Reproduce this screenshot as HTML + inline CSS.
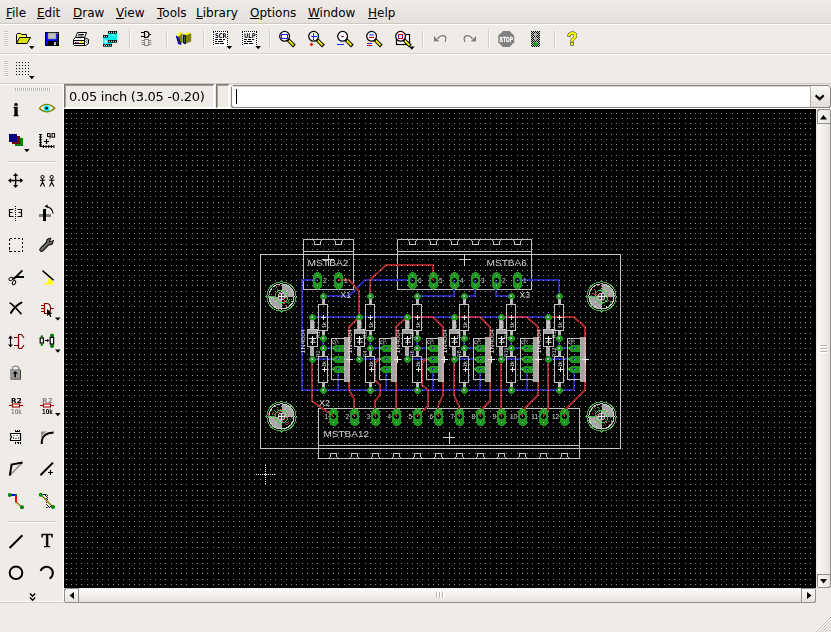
<!DOCTYPE html><html><head><meta charset="utf-8"><title>EAGLE Board</title>
<style>
html,body{margin:0;padding:0}
body{width:831px;height:632px;background:#efebe7;position:relative;overflow:hidden;font-family:"DejaVu Sans","Liberation Sans",sans-serif;font-size:12px;color:#000}
.abs{position:absolute}
.menu span{position:absolute;top:5px;white-space:nowrap;font-size:12px;line-height:16px}
.menu u{text-decoration:underline;text-underline-offset:1px}

</style></head><body>
<svg class="abs" style="left:0;top:0;will-change:transform" width="831" height="632" viewBox="0 0 831 632" shape-rendering="crispEdges">
<rect x="64" y="109" width="752" height="479" fill="#000"/>
<g font-family="Liberation Sans, sans-serif"><rect x="260.5" y="254.5" width="360.0" height="194.0" fill="none" stroke="#c0c0c0" stroke-width="1"/>
<path d="M281.5 296.5V283.9A12.6 12.6 0 0 1 294.1 296.5Z" fill="#a4a4a4"/><path d="M281.5 296.5V309.1A12.6 12.6 0 0 1 268.9 296.5Z" fill="#a4a4a4"/><circle cx="281.5" cy="296.5" r="12.6" fill="none" stroke="#c8c8c8" stroke-width="1"/><rect x="271" y="294" width="1" height="1" fill="#30b030"/><rect x="284" y="297" width="1" height="1" fill="#c03068"/><rect x="281" y="291" width="1" height="1" fill="#8cc88c"/><rect x="285" y="288" width="1" height="1" fill="#d0a8b8"/><rect x="284" y="292" width="1" height="1" fill="#8cc88c"/><rect x="292" y="294" width="1" height="1" fill="#d0a8b8"/><rect x="286" y="298" width="1" height="1" fill="#30b030"/><rect x="277" y="302" width="1" height="1" fill="#d0a8b8"/><rect x="279" y="292" width="1" height="1" fill="#30b030"/><rect x="286" y="298" width="1" height="1" fill="#c03068"/><rect x="280" y="303" width="1" height="1" fill="#8cc88c"/><rect x="292" y="289" width="1" height="1" fill="#d0a8b8"/><rect x="279" y="290" width="1" height="1" fill="#30b030"/><rect x="287" y="296" width="1" height="1" fill="#d0a8b8"/><rect x="281" y="291" width="1" height="1" fill="#30b030"/><rect x="269" y="293" width="1" height="1" fill="#c03068"/><rect x="287" y="302" width="1" height="1" fill="#30b030"/><rect x="280" y="300" width="1" height="1" fill="#d0a8b8"/><rect x="279" y="308" width="1" height="1" fill="#8cc88c"/><rect x="284" y="285" width="1" height="1" fill="#d0a8b8"/><rect x="286" y="297" width="1" height="1" fill="#30b030"/><rect x="281" y="308" width="1" height="1" fill="#d0a8b8"/><rect x="278" y="292" width="1" height="1" fill="#30b030"/><rect x="275" y="288" width="1" height="1" fill="#c03068"/><rect x="286" y="293" width="1" height="1" fill="#8cc88c"/><rect x="288" y="286" width="1" height="1" fill="#d0a8b8"/><rect x="276" y="287" width="1" height="1" fill="#30b030"/><rect x="275" y="297" width="1" height="1" fill="#d0a8b8"/><rect x="275" y="294" width="1" height="1" fill="#30b030"/><rect x="278" y="307" width="1" height="1" fill="#d0a8b8"/><rect x="286" y="302" width="1" height="1" fill="#30b030"/><rect x="283" y="290" width="1" height="1" fill="#d0a8b8"/><rect x="289" y="299" width="1" height="1" fill="#30b030"/><rect x="285" y="297" width="1" height="1" fill="#c03068"/><rect x="271" y="299" width="1" height="1" fill="#8cc88c"/><rect x="276" y="305" width="1" height="1" fill="#d0a8b8"/><rect x="282" y="290" width="1" height="1" fill="#8cc88c"/><rect x="277" y="299" width="1" height="1" fill="#d0a8b8"/><rect x="283" y="303" width="1" height="1" fill="#30b030"/><rect x="271" y="296" width="1" height="1" fill="#c03068"/><rect x="284" y="285" width="1" height="1" fill="#8cc88c"/><rect x="285" y="284" width="1" height="1" fill="#d0a8b8"/><rect x="274" y="296" width="1" height="1" fill="#30b030"/><rect x="284" y="301" width="1" height="1" fill="#c03068"/><rect x="288" y="303" width="1" height="1" fill="#30b030"/><rect x="285" y="291" width="1" height="1" fill="#d0a8b8"/><rect x="288" y="306" width="1" height="1" fill="#30b030"/><rect x="270" y="296" width="1" height="1" fill="#d0a8b8"/><rect x="283" y="285" width="1" height="1" fill="#8cc88c"/><rect x="286" y="305" width="1" height="1" fill="#c03068"/><rect x="288" y="301" width="1" height="1" fill="#30b030"/><rect x="276" y="286" width="1" height="1" fill="#c03068"/><rect x="284" y="300" width="1" height="1" fill="#30b030"/><rect x="282" y="289" width="1" height="1" fill="#d0a8b8"/><rect x="288" y="300" width="1" height="1" fill="#30b030"/><rect x="287" y="290" width="1" height="1" fill="#d0a8b8"/><rect x="289" y="302" width="1" height="1" fill="#30b030"/><rect x="285" y="305" width="1" height="1" fill="#c03068"/><rect x="280" y="301" width="1" height="1" fill="#8cc88c"/><rect x="271" y="298" width="1" height="1" fill="#d0a8b8"/><rect x="289" y="299" width="1" height="1" fill="#30b030"/><rect x="278" y="298" width="1" height="1" fill="#d0a8b8"/><rect x="284" y="302" width="1" height="1" fill="#30b030"/><rect x="280" y="306" width="1" height="1" fill="#d0a8b8"/><rect x="287" y="292" width="1" height="1" fill="#8cc88c"/><rect x="278" y="309" width="1" height="1" fill="#d0a8b8"/><rect x="278" y="303" width="1" height="1" fill="#8cc88c"/><rect x="278" y="286" width="1" height="1" fill="#c03068"/><rect x="285" y="297" width="1" height="1" fill="#30b030"/><rect x="279" y="285" width="1" height="1" fill="#c03068"/><rect x="282" y="283" width="1" height="1" fill="#8cc88c"/><rect x="284" y="300" width="1" height="1" fill="#c03068"/><rect x="272" y="287" width="1" height="1" fill="#30b030"/><rect x="273" y="304" width="1" height="1" fill="#d0a8b8"/><rect x="282" y="305" width="1" height="1" fill="#30b030"/><rect x="283" y="302" width="1" height="1" fill="#c03068"/><rect x="277" y="290" width="1" height="1" fill="#30b030"/><rect x="280" y="292" width="1" height="1" fill="#c03068"/><rect x="288" y="287" width="1" height="1" fill="#8cc88c"/><rect x="277" y="289" width="1" height="1" fill="#c03068"/><rect x="291" y="299" width="1" height="1" fill="#30b030"/><rect x="278" y="302" width="1" height="1" fill="#d0a8b8"/><rect x="282" y="305" width="1" height="1" fill="#30b030"/><rect x="278" y="300" width="1" height="1" fill="#d0a8b8"/><rect x="285" y="295" width="1" height="1" fill="#8cc88c"/><rect x="273" y="289" width="1" height="1" fill="#c03068"/><rect x="284" y="285" width="1" height="1" fill="#8cc88c"/><rect x="280" y="302" width="1" height="1" fill="#d0a8b8"/><rect x="287" y="292" width="1" height="1" fill="#8cc88c"/><rect x="284" y="303" width="1" height="1" fill="#c03068"/><circle cx="281.5" cy="296.5" r="14.6" fill="none" stroke="#46b446" stroke-width="1"/><circle cx="281.5" cy="296.5" r="6.5" fill="none" stroke="#46c846" stroke-width="1"/><path d="M265.5 296.5H275.0" stroke="#46b446" stroke-width="1"/><circle cx="281.5" cy="296.5" r="3.8" fill="#b4b4b4"/><rect x="279.0" y="294.0" width="2" height="2" fill="#484848"/><rect x="279.0" y="297.0" width="2" height="2" fill="#484848"/><rect x="282.0" y="294.0" width="2" height="2" fill="#484848"/><rect x="282.0" y="297.0" width="2" height="2" fill="#484848"/><path d="M278.0 296.5H285.0M281.5 293.0V300.0" stroke="#f0f0f0" stroke-width="1"/>
<path d="M601.5 296.5V283.9A12.6 12.6 0 0 1 614.1 296.5Z" fill="#a4a4a4"/><path d="M601.5 296.5V309.1A12.6 12.6 0 0 1 588.9 296.5Z" fill="#a4a4a4"/><circle cx="601.5" cy="296.5" r="12.6" fill="none" stroke="#c8c8c8" stroke-width="1"/><rect x="589" y="291" width="1" height="1" fill="#30b030"/><rect x="596" y="298" width="1" height="1" fill="#d0a8b8"/><rect x="607" y="294" width="1" height="1" fill="#8cc88c"/><rect x="599" y="305" width="1" height="1" fill="#d0a8b8"/><rect x="606" y="301" width="1" height="1" fill="#30b030"/><rect x="600" y="283" width="1" height="1" fill="#c03068"/><rect x="602" y="302" width="1" height="1" fill="#30b030"/><rect x="593" y="293" width="1" height="1" fill="#c03068"/><rect x="612" y="291" width="1" height="1" fill="#8cc88c"/><rect x="602" y="302" width="1" height="1" fill="#c03068"/><rect x="599" y="290" width="1" height="1" fill="#30b030"/><rect x="602" y="292" width="1" height="1" fill="#d0a8b8"/><rect x="607" y="286" width="1" height="1" fill="#8cc88c"/><rect x="609" y="294" width="1" height="1" fill="#d0a8b8"/><rect x="606" y="306" width="1" height="1" fill="#30b030"/><rect x="611" y="292" width="1" height="1" fill="#d0a8b8"/><rect x="598" y="298" width="1" height="1" fill="#8cc88c"/><rect x="592" y="296" width="1" height="1" fill="#d0a8b8"/><rect x="604" y="299" width="1" height="1" fill="#30b030"/><rect x="609" y="290" width="1" height="1" fill="#d0a8b8"/><rect x="606" y="290" width="1" height="1" fill="#8cc88c"/><rect x="594" y="302" width="1" height="1" fill="#d0a8b8"/><rect x="604" y="305" width="1" height="1" fill="#30b030"/><rect x="607" y="294" width="1" height="1" fill="#d0a8b8"/><rect x="596" y="308" width="1" height="1" fill="#8cc88c"/><rect x="598" y="304" width="1" height="1" fill="#d0a8b8"/><rect x="597" y="295" width="1" height="1" fill="#30b030"/><rect x="592" y="293" width="1" height="1" fill="#c03068"/><rect x="603" y="300" width="1" height="1" fill="#30b030"/><rect x="589" y="296" width="1" height="1" fill="#c03068"/><rect x="606" y="292" width="1" height="1" fill="#8cc88c"/><rect x="594" y="289" width="1" height="1" fill="#c03068"/><rect x="605" y="293" width="1" height="1" fill="#8cc88c"/><rect x="611" y="290" width="1" height="1" fill="#d0a8b8"/><rect x="602" y="292" width="1" height="1" fill="#8cc88c"/><rect x="604" y="286" width="1" height="1" fill="#d0a8b8"/><rect x="595" y="290" width="1" height="1" fill="#30b030"/><rect x="607" y="285" width="1" height="1" fill="#d0a8b8"/><rect x="605" y="296" width="1" height="1" fill="#8cc88c"/><rect x="609" y="301" width="1" height="1" fill="#c03068"/><rect x="605" y="300" width="1" height="1" fill="#30b030"/><rect x="596" y="294" width="1" height="1" fill="#c03068"/><rect x="611" y="291" width="1" height="1" fill="#8cc88c"/><rect x="610" y="297" width="1" height="1" fill="#c03068"/><rect x="608" y="306" width="1" height="1" fill="#30b030"/><rect x="604" y="289" width="1" height="1" fill="#d0a8b8"/><rect x="600" y="289" width="1" height="1" fill="#30b030"/><rect x="607" y="293" width="1" height="1" fill="#d0a8b8"/><rect x="593" y="293" width="1" height="1" fill="#30b030"/><rect x="614" y="293" width="1" height="1" fill="#d0a8b8"/><rect x="610" y="301" width="1" height="1" fill="#30b030"/><rect x="593" y="301" width="1" height="1" fill="#d0a8b8"/><rect x="610" y="302" width="1" height="1" fill="#30b030"/><rect x="598" y="298" width="1" height="1" fill="#d0a8b8"/><rect x="592" y="305" width="1" height="1" fill="#8cc88c"/><rect x="605" y="290" width="1" height="1" fill="#d0a8b8"/><rect x="597" y="296" width="1" height="1" fill="#8cc88c"/><rect x="607" y="301" width="1" height="1" fill="#c03068"/><rect x="610" y="301" width="1" height="1" fill="#30b030"/><rect x="609" y="293" width="1" height="1" fill="#d0a8b8"/><rect x="597" y="285" width="1" height="1" fill="#30b030"/><rect x="601" y="286" width="1" height="1" fill="#c03068"/><rect x="611" y="303" width="1" height="1" fill="#30b030"/><rect x="591" y="295" width="1" height="1" fill="#c03068"/><rect x="606" y="297" width="1" height="1" fill="#30b030"/><rect x="604" y="284" width="1" height="1" fill="#d0a8b8"/><rect x="602" y="303" width="1" height="1" fill="#30b030"/><rect x="597" y="300" width="1" height="1" fill="#d0a8b8"/><rect x="603" y="286" width="1" height="1" fill="#8cc88c"/><rect x="596" y="306" width="1" height="1" fill="#d0a8b8"/><rect x="614" y="295" width="1" height="1" fill="#8cc88c"/><rect x="608" y="300" width="1" height="1" fill="#c03068"/><rect x="596" y="296" width="1" height="1" fill="#8cc88c"/><rect x="595" y="292" width="1" height="1" fill="#c03068"/><rect x="607" y="301" width="1" height="1" fill="#30b030"/><rect x="591" y="305" width="1" height="1" fill="#d0a8b8"/><rect x="601" y="309" width="1" height="1" fill="#8cc88c"/><rect x="601" y="288" width="1" height="1" fill="#d0a8b8"/><rect x="605" y="295" width="1" height="1" fill="#8cc88c"/><rect x="594" y="294" width="1" height="1" fill="#c03068"/><rect x="595" y="292" width="1" height="1" fill="#30b030"/><rect x="607" y="299" width="1" height="1" fill="#c03068"/><rect x="610" y="302" width="1" height="1" fill="#30b030"/><rect x="598" y="285" width="1" height="1" fill="#c03068"/><rect x="610" y="293" width="1" height="1" fill="#8cc88c"/><rect x="595" y="285" width="1" height="1" fill="#c03068"/><rect x="605" y="295" width="1" height="1" fill="#8cc88c"/><rect x="607" y="298" width="1" height="1" fill="#c03068"/><rect x="613" y="296" width="1" height="1" fill="#8cc88c"/><rect x="589" y="290" width="1" height="1" fill="#c03068"/><circle cx="601.5" cy="296.5" r="14.6" fill="none" stroke="#46b446" stroke-width="1"/><circle cx="601.5" cy="296.5" r="6.5" fill="none" stroke="#46c846" stroke-width="1"/><path d="M585.5 296.5H595.0" stroke="#46b446" stroke-width="1"/><circle cx="601.5" cy="296.5" r="3.8" fill="#b4b4b4"/><rect x="599.0" y="294.0" width="2" height="2" fill="#484848"/><rect x="599.0" y="297.0" width="2" height="2" fill="#484848"/><rect x="602.0" y="294.0" width="2" height="2" fill="#484848"/><rect x="602.0" y="297.0" width="2" height="2" fill="#484848"/><path d="M598.0 296.5H605.0M601.5 293.0V300.0" stroke="#f0f0f0" stroke-width="1"/>
<path d="M281.5 416.5V403.9A12.6 12.6 0 0 1 294.1 416.5Z" fill="#a4a4a4"/><path d="M281.5 416.5V429.1A12.6 12.6 0 0 1 268.9 416.5Z" fill="#a4a4a4"/><circle cx="281.5" cy="416.5" r="12.6" fill="none" stroke="#c8c8c8" stroke-width="1"/><rect x="285" y="414" width="1" height="1" fill="#8cc88c"/><rect x="282" y="421" width="1" height="1" fill="#c03068"/><rect x="284" y="419" width="1" height="1" fill="#30b030"/><rect x="268" y="413" width="1" height="1" fill="#c03068"/><rect x="284" y="408" width="1" height="1" fill="#8cc88c"/><rect x="274" y="421" width="1" height="1" fill="#d0a8b8"/><rect x="284" y="410" width="1" height="1" fill="#8cc88c"/><rect x="268" y="415" width="1" height="1" fill="#c03068"/><rect x="292" y="411" width="1" height="1" fill="#8cc88c"/><rect x="285" y="423" width="1" height="1" fill="#c03068"/><rect x="285" y="405" width="1" height="1" fill="#8cc88c"/><rect x="277" y="418" width="1" height="1" fill="#d0a8b8"/><rect x="291" y="422" width="1" height="1" fill="#30b030"/><rect x="287" y="417" width="1" height="1" fill="#c03068"/><rect x="279" y="413" width="1" height="1" fill="#30b030"/><rect x="273" y="418" width="1" height="1" fill="#d0a8b8"/><rect x="282" y="405" width="1" height="1" fill="#8cc88c"/><rect x="275" y="419" width="1" height="1" fill="#d0a8b8"/><rect x="277" y="407" width="1" height="1" fill="#30b030"/><rect x="293" y="411" width="1" height="1" fill="#d0a8b8"/><rect x="284" y="409" width="1" height="1" fill="#8cc88c"/><rect x="288" y="416" width="1" height="1" fill="#d0a8b8"/><rect x="271" y="410" width="1" height="1" fill="#30b030"/><rect x="277" y="409" width="1" height="1" fill="#c03068"/><rect x="292" y="423" width="1" height="1" fill="#30b030"/><rect x="277" y="411" width="1" height="1" fill="#c03068"/><rect x="268" y="416" width="1" height="1" fill="#8cc88c"/><rect x="292" y="418" width="1" height="1" fill="#c03068"/><rect x="282" y="410" width="1" height="1" fill="#8cc88c"/><rect x="272" y="420" width="1" height="1" fill="#d0a8b8"/><rect x="281" y="406" width="1" height="1" fill="#30b030"/><rect x="280" y="411" width="1" height="1" fill="#c03068"/><rect x="281" y="427" width="1" height="1" fill="#30b030"/><rect x="286" y="417" width="1" height="1" fill="#c03068"/><rect x="276" y="422" width="1" height="1" fill="#8cc88c"/><rect x="278" y="412" width="1" height="1" fill="#c03068"/><rect x="279" y="420" width="1" height="1" fill="#8cc88c"/><rect x="280" y="421" width="1" height="1" fill="#d0a8b8"/><rect x="273" y="417" width="1" height="1" fill="#8cc88c"/><rect x="272" y="423" width="1" height="1" fill="#d0a8b8"/><rect x="288" y="414" width="1" height="1" fill="#8cc88c"/><rect x="280" y="409" width="1" height="1" fill="#c03068"/><rect x="289" y="412" width="1" height="1" fill="#8cc88c"/><rect x="274" y="414" width="1" height="1" fill="#c03068"/><rect x="288" y="421" width="1" height="1" fill="#30b030"/><rect x="285" y="415" width="1" height="1" fill="#d0a8b8"/><rect x="290" y="408" width="1" height="1" fill="#8cc88c"/><rect x="271" y="417" width="1" height="1" fill="#d0a8b8"/><rect x="280" y="410" width="1" height="1" fill="#30b030"/><rect x="277" y="412" width="1" height="1" fill="#c03068"/><rect x="273" y="412" width="1" height="1" fill="#30b030"/><rect x="280" y="422" width="1" height="1" fill="#d0a8b8"/><rect x="274" y="410" width="1" height="1" fill="#30b030"/><rect x="284" y="419" width="1" height="1" fill="#c03068"/><rect x="285" y="408" width="1" height="1" fill="#8cc88c"/><rect x="269" y="415" width="1" height="1" fill="#c03068"/><rect x="277" y="409" width="1" height="1" fill="#30b030"/><rect x="268" y="414" width="1" height="1" fill="#c03068"/><rect x="279" y="412" width="1" height="1" fill="#30b030"/><rect x="272" y="413" width="1" height="1" fill="#c03068"/><rect x="272" y="414" width="1" height="1" fill="#30b030"/><rect x="285" y="417" width="1" height="1" fill="#c03068"/><rect x="277" y="419" width="1" height="1" fill="#8cc88c"/><rect x="271" y="418" width="1" height="1" fill="#d0a8b8"/><rect x="290" y="424" width="1" height="1" fill="#30b030"/><rect x="284" y="412" width="1" height="1" fill="#d0a8b8"/><rect x="277" y="417" width="1" height="1" fill="#8cc88c"/><rect x="273" y="426" width="1" height="1" fill="#d0a8b8"/><rect x="272" y="426" width="1" height="1" fill="#8cc88c"/><rect x="275" y="424" width="1" height="1" fill="#d0a8b8"/><rect x="282" y="420" width="1" height="1" fill="#30b030"/><rect x="287" y="424" width="1" height="1" fill="#c03068"/><rect x="290" y="419" width="1" height="1" fill="#30b030"/><rect x="288" y="414" width="1" height="1" fill="#d0a8b8"/><rect x="279" y="413" width="1" height="1" fill="#30b030"/><rect x="286" y="424" width="1" height="1" fill="#c03068"/><rect x="285" y="413" width="1" height="1" fill="#8cc88c"/><rect x="275" y="419" width="1" height="1" fill="#d0a8b8"/><rect x="286" y="412" width="1" height="1" fill="#8cc88c"/><rect x="289" y="409" width="1" height="1" fill="#d0a8b8"/><rect x="284" y="429" width="1" height="1" fill="#30b030"/><rect x="288" y="423" width="1" height="1" fill="#c03068"/><rect x="290" y="406" width="1" height="1" fill="#8cc88c"/><rect x="285" y="408" width="1" height="1" fill="#d0a8b8"/><rect x="285" y="410" width="1" height="1" fill="#8cc88c"/><rect x="282" y="409" width="1" height="1" fill="#d0a8b8"/><rect x="278" y="410" width="1" height="1" fill="#30b030"/><rect x="283" y="410" width="1" height="1" fill="#d0a8b8"/><rect x="291" y="417" width="1" height="1" fill="#30b030"/><rect x="287" y="422" width="1" height="1" fill="#c03068"/><circle cx="281.5" cy="416.5" r="14.6" fill="none" stroke="#46b446" stroke-width="1"/><circle cx="281.5" cy="416.5" r="6.5" fill="none" stroke="#46c846" stroke-width="1"/><path d="M265.5 416.5H275.0" stroke="#46b446" stroke-width="1"/><circle cx="281.5" cy="416.5" r="3.8" fill="#b4b4b4"/><rect x="279.0" y="414.0" width="2" height="2" fill="#484848"/><rect x="279.0" y="417.0" width="2" height="2" fill="#484848"/><rect x="282.0" y="414.0" width="2" height="2" fill="#484848"/><rect x="282.0" y="417.0" width="2" height="2" fill="#484848"/><path d="M278.0 416.5H285.0M281.5 413.0V420.0" stroke="#f0f0f0" stroke-width="1"/>
<path d="M601.5 416.5V403.9A12.6 12.6 0 0 1 614.1 416.5Z" fill="#a4a4a4"/><path d="M601.5 416.5V429.1A12.6 12.6 0 0 1 588.9 416.5Z" fill="#a4a4a4"/><circle cx="601.5" cy="416.5" r="12.6" fill="none" stroke="#c8c8c8" stroke-width="1"/><rect x="594" y="410" width="1" height="1" fill="#30b030"/><rect x="612" y="410" width="1" height="1" fill="#d0a8b8"/><rect x="597" y="407" width="1" height="1" fill="#30b030"/><rect x="597" y="418" width="1" height="1" fill="#d0a8b8"/><rect x="611" y="420" width="1" height="1" fill="#30b030"/><rect x="605" y="414" width="1" height="1" fill="#d0a8b8"/><rect x="597" y="421" width="1" height="1" fill="#8cc88c"/><rect x="594" y="422" width="1" height="1" fill="#d0a8b8"/><rect x="592" y="426" width="1" height="1" fill="#8cc88c"/><rect x="598" y="407" width="1" height="1" fill="#c03068"/><rect x="611" y="421" width="1" height="1" fill="#30b030"/><rect x="607" y="408" width="1" height="1" fill="#d0a8b8"/><rect x="606" y="413" width="1" height="1" fill="#8cc88c"/><rect x="593" y="421" width="1" height="1" fill="#d0a8b8"/><rect x="597" y="414" width="1" height="1" fill="#30b030"/><rect x="595" y="417" width="1" height="1" fill="#d0a8b8"/><rect x="596" y="416" width="1" height="1" fill="#8cc88c"/><rect x="607" y="411" width="1" height="1" fill="#d0a8b8"/><rect x="605" y="421" width="1" height="1" fill="#30b030"/><rect x="604" y="423" width="1" height="1" fill="#c03068"/><rect x="602" y="409" width="1" height="1" fill="#8cc88c"/><rect x="602" y="408" width="1" height="1" fill="#d0a8b8"/><rect x="602" y="419" width="1" height="1" fill="#30b030"/><rect x="605" y="412" width="1" height="1" fill="#d0a8b8"/><rect x="594" y="421" width="1" height="1" fill="#8cc88c"/><rect x="592" y="416" width="1" height="1" fill="#c03068"/><rect x="612" y="408" width="1" height="1" fill="#8cc88c"/><rect x="592" y="413" width="1" height="1" fill="#c03068"/><rect x="601" y="420" width="1" height="1" fill="#30b030"/><rect x="593" y="408" width="1" height="1" fill="#c03068"/><rect x="599" y="421" width="1" height="1" fill="#8cc88c"/><rect x="597" y="419" width="1" height="1" fill="#d0a8b8"/><rect x="590" y="420" width="1" height="1" fill="#8cc88c"/><rect x="596" y="415" width="1" height="1" fill="#c03068"/><rect x="609" y="421" width="1" height="1" fill="#30b030"/><rect x="598" y="412" width="1" height="1" fill="#c03068"/><rect x="604" y="413" width="1" height="1" fill="#8cc88c"/><rect x="597" y="405" width="1" height="1" fill="#c03068"/><rect x="593" y="426" width="1" height="1" fill="#8cc88c"/><rect x="599" y="408" width="1" height="1" fill="#c03068"/><rect x="610" y="417" width="1" height="1" fill="#30b030"/><rect x="599" y="411" width="1" height="1" fill="#c03068"/><rect x="599" y="411" width="1" height="1" fill="#30b030"/><rect x="590" y="421" width="1" height="1" fill="#d0a8b8"/><rect x="590" y="411" width="1" height="1" fill="#30b030"/><rect x="603" y="425" width="1" height="1" fill="#c03068"/><rect x="598" y="414" width="1" height="1" fill="#30b030"/><rect x="599" y="422" width="1" height="1" fill="#d0a8b8"/><rect x="606" y="422" width="1" height="1" fill="#30b030"/><rect x="608" y="413" width="1" height="1" fill="#d0a8b8"/><rect x="594" y="420" width="1" height="1" fill="#8cc88c"/><rect x="594" y="407" width="1" height="1" fill="#c03068"/><rect x="609" y="416" width="1" height="1" fill="#8cc88c"/><rect x="595" y="408" width="1" height="1" fill="#c03068"/><rect x="588" y="420" width="1" height="1" fill="#8cc88c"/><rect x="596" y="426" width="1" height="1" fill="#d0a8b8"/><rect x="606" y="415" width="1" height="1" fill="#8cc88c"/><rect x="593" y="420" width="1" height="1" fill="#d0a8b8"/><rect x="602" y="410" width="1" height="1" fill="#8cc88c"/><rect x="594" y="418" width="1" height="1" fill="#d0a8b8"/><rect x="598" y="407" width="1" height="1" fill="#30b030"/><rect x="604" y="412" width="1" height="1" fill="#d0a8b8"/><rect x="603" y="408" width="1" height="1" fill="#8cc88c"/><rect x="606" y="421" width="1" height="1" fill="#c03068"/><rect x="588" y="416" width="1" height="1" fill="#8cc88c"/><rect x="606" y="409" width="1" height="1" fill="#d0a8b8"/><rect x="596" y="424" width="1" height="1" fill="#8cc88c"/><rect x="596" y="417" width="1" height="1" fill="#d0a8b8"/><rect x="592" y="408" width="1" height="1" fill="#30b030"/><rect x="603" y="409" width="1" height="1" fill="#d0a8b8"/><rect x="603" y="419" width="1" height="1" fill="#30b030"/><rect x="607" y="411" width="1" height="1" fill="#d0a8b8"/><rect x="601" y="412" width="1" height="1" fill="#8cc88c"/><rect x="609" y="409" width="1" height="1" fill="#d0a8b8"/><rect x="594" y="427" width="1" height="1" fill="#8cc88c"/><rect x="605" y="424" width="1" height="1" fill="#c03068"/><rect x="597" y="416" width="1" height="1" fill="#8cc88c"/><rect x="608" y="421" width="1" height="1" fill="#c03068"/><rect x="589" y="422" width="1" height="1" fill="#8cc88c"/><rect x="604" y="409" width="1" height="1" fill="#d0a8b8"/><rect x="608" y="415" width="1" height="1" fill="#8cc88c"/><rect x="605" y="419" width="1" height="1" fill="#c03068"/><rect x="591" y="410" width="1" height="1" fill="#30b030"/><rect x="612" y="423" width="1" height="1" fill="#c03068"/><rect x="596" y="420" width="1" height="1" fill="#8cc88c"/><rect x="590" y="409" width="1" height="1" fill="#c03068"/><rect x="601" y="411" width="1" height="1" fill="#8cc88c"/><rect x="609" y="424" width="1" height="1" fill="#c03068"/><rect x="593" y="425" width="1" height="1" fill="#8cc88c"/><rect x="598" y="414" width="1" height="1" fill="#c03068"/><circle cx="601.5" cy="416.5" r="14.6" fill="none" stroke="#46b446" stroke-width="1"/><circle cx="601.5" cy="416.5" r="6.5" fill="none" stroke="#46c846" stroke-width="1"/><path d="M585.5 416.5H595.0" stroke="#46b446" stroke-width="1"/><circle cx="601.5" cy="416.5" r="3.8" fill="#b4b4b4"/><rect x="599.0" y="414.0" width="2" height="2" fill="#484848"/><rect x="599.0" y="417.0" width="2" height="2" fill="#484848"/><rect x="602.0" y="414.0" width="2" height="2" fill="#484848"/><rect x="602.0" y="417.0" width="2" height="2" fill="#484848"/><path d="M598.0 416.5H605.0M601.5 413.0V420.0" stroke="#f0f0f0" stroke-width="1"/>
<rect x="303.5" y="239.5" width="50.0" height="50.0" fill="none" stroke="#c0c0c0" stroke-width="1"/>
<path d="M303 251.5H354" stroke="#c0c0c0"/>
<path d="M313.5 239.5L315.0 244.5H320.0L321.5 239.5" stroke="#c0c0c0" fill="none"/>
<path d="M334.5 239.5L336.0 244.5H341.0L342.5 239.5" stroke="#c0c0c0" fill="none"/>
<rect x="397.5" y="239.5" width="134.0" height="50.0" fill="none" stroke="#c0c0c0" stroke-width="1"/>
<path d="M397 251.5H532" stroke="#c0c0c0"/>
<path d="M408.5 239.5L410.0 244.5H415.0L416.5 239.5" stroke="#c0c0c0" fill="none"/>
<path d="M429.5 239.5L431.0 244.5H436.0L437.5 239.5" stroke="#c0c0c0" fill="none"/>
<path d="M450.5 239.5L452.0 244.5H457.0L458.5 239.5" stroke="#c0c0c0" fill="none"/>
<path d="M471.5 239.5L473.0 244.5H478.0L479.5 239.5" stroke="#c0c0c0" fill="none"/>
<path d="M492.5 239.5L494.0 244.5H499.0L500.5 239.5" stroke="#c0c0c0" fill="none"/>
<path d="M513.5 239.5L515.0 244.5H520.0L521.5 239.5" stroke="#c0c0c0" fill="none"/>
<rect x="318.5" y="408.5" width="261.0" height="50.0" fill="none" stroke="#c0c0c0" stroke-width="1"/>
<path d="M318 445.5H580" stroke="#c0c0c0"/>
<path d="M329.5 458.5L331.0 453.5H336.0L337.5 458.5" stroke="#c0c0c0" fill="none"/>
<path d="M350.5 458.5L352.0 453.5H357.0L358.5 458.5" stroke="#c0c0c0" fill="none"/>
<path d="M371.5 458.5L373.0 453.5H378.0L379.5 458.5" stroke="#c0c0c0" fill="none"/>
<path d="M392.5 458.5L394.0 453.5H399.0L400.5 458.5" stroke="#c0c0c0" fill="none"/>
<path d="M413.5 458.5L415.0 453.5H420.0L421.5 458.5" stroke="#c0c0c0" fill="none"/>
<path d="M434.5 458.5L436.0 453.5H441.0L442.5 458.5" stroke="#c0c0c0" fill="none"/>
<path d="M455.5 458.5L457.0 453.5H462.0L463.5 458.5" stroke="#c0c0c0" fill="none"/>
<path d="M476.5 458.5L478.0 453.5H483.0L484.5 458.5" stroke="#c0c0c0" fill="none"/>
<path d="M497.5 458.5L499.0 453.5H504.0L505.5 458.5" stroke="#c0c0c0" fill="none"/>
<path d="M518.5 458.5L520.0 453.5H525.0L526.5 458.5" stroke="#c0c0c0" fill="none"/>
<path d="M539.5 458.5L541.0 453.5H546.0L547.5 458.5" stroke="#c0c0c0" fill="none"/>
<path d="M560.5 458.5L562.0 453.5H567.0L568.5 458.5" stroke="#c0c0c0" fill="none"/>
<polyline points="317.0,280.0 302.0,280.0 302.0,390.0 574.0,390.0 574.0,369.0" fill="none" stroke="#2626a8" stroke-width="2" />
<polyline points="323.0,296.0 349.0,296.0 365.0,280.0 412.0,280.0" fill="none" stroke="#2626a8" stroke-width="2" />
<polyline points="417.0,296.0 454.0,296.0 454.0,280.0" fill="none" stroke="#2626a8" stroke-width="2" />
<polyline points="464.0,296.0 475.0,296.0 475.0,280.0" fill="none" stroke="#2626a8" stroke-width="2" />
<polyline points="511.0,296.0 496.0,296.0 496.0,280.0" fill="none" stroke="#2626a8" stroke-width="2" />
<polyline points="559.0,296.0 559.0,280.0 517.0,280.0" fill="none" stroke="#2626a8" stroke-width="2" />
<polyline points="312.0,317.0 548.0,317.0" fill="none" stroke="#2626a8" stroke-width="2" />
<polyline points="323.0,338.0 323.0,348.0 338.0,348.0" fill="none" stroke="#2626a8" stroke-width="2" />
<polyline points="312.0,359.0 338.0,359.0" fill="none" stroke="#2626a8" stroke-width="2" />
<polyline points="338.0,369.0 338.0,390.0" fill="none" stroke="#2626a8" stroke-width="2" />
<polyline points="370.0,338.0 370.0,348.0 386.0,348.0" fill="none" stroke="#2626a8" stroke-width="2" />
<polyline points="359.0,359.0 386.0,359.0" fill="none" stroke="#2626a8" stroke-width="2" />
<polyline points="386.0,369.0 386.0,390.0" fill="none" stroke="#2626a8" stroke-width="2" />
<polyline points="417.0,338.0 417.0,348.0 433.0,348.0" fill="none" stroke="#2626a8" stroke-width="2" />
<polyline points="407.0,359.0 433.0,359.0" fill="none" stroke="#2626a8" stroke-width="2" />
<polyline points="433.0,369.0 433.0,390.0" fill="none" stroke="#2626a8" stroke-width="2" />
<polyline points="464.0,338.0 464.0,348.0 480.0,348.0" fill="none" stroke="#2626a8" stroke-width="2" />
<polyline points="454.0,359.0 480.0,359.0" fill="none" stroke="#2626a8" stroke-width="2" />
<polyline points="480.0,369.0 480.0,390.0" fill="none" stroke="#2626a8" stroke-width="2" />
<polyline points="511.0,338.0 511.0,348.0 527.0,348.0" fill="none" stroke="#2626a8" stroke-width="2" />
<polyline points="501.0,359.0 527.0,359.0" fill="none" stroke="#2626a8" stroke-width="2" />
<polyline points="527.0,369.0 527.0,390.0" fill="none" stroke="#2626a8" stroke-width="2" />
<polyline points="559.0,338.0 559.0,348.0 574.0,348.0" fill="none" stroke="#2626a8" stroke-width="2" />
<polyline points="548.0,359.0 574.0,359.0" fill="none" stroke="#2626a8" stroke-width="2" />
<polyline points="338.0,280.0 349.0,280.0 359.0,291.0 359.0,317.0" fill="none" stroke="#a22626" stroke-width="2" />
<polyline points="433.0,280.0 433.0,265.0 386.0,265.0 370.0,280.0 370.0,296.0" fill="none" stroke="#a22626" stroke-width="2" />
<polyline points="359.0,317.0 349.0,327.0 349.0,390.0 354.0,399.0 354.0,416.0" fill="none" stroke="#a22626" stroke-width="2" />
<polyline points="407.0,317.0 396.0,327.0 396.0,416.0" fill="none" stroke="#a22626" stroke-width="2" />
<polyline points="407.0,317.0 433.0,317.0 443.0,327.0 443.0,395.0 438.0,406.0 438.0,416.0" fill="none" stroke="#a22626" stroke-width="2" />
<polyline points="454.0,317.0 480.0,317.0 490.0,327.0 490.0,401.0 480.0,411.0 480.0,416.0" fill="none" stroke="#a22626" stroke-width="2" />
<polyline points="501.0,317.0 527.0,317.0 538.0,327.0 538.0,395.0 522.0,411.0 522.0,416.0" fill="none" stroke="#a22626" stroke-width="2" />
<polyline points="548.0,317.0 574.0,317.0 585.0,327.0 585.0,390.0 564.0,411.0 564.0,416.0" fill="none" stroke="#a22626" stroke-width="2" />
<polyline points="312.0,359.0 312.0,401.0 333.0,416.0" fill="none" stroke="#a22626" stroke-width="2" />
<polyline points="386.0,359.0 379.0,359.0 375.0,363.0 375.0,380.0 380.0,385.0 380.0,395.0 375.0,401.0 375.0,416.0" fill="none" stroke="#a22626" stroke-width="2" />
<polyline points="433.0,359.0 426.0,359.0 422.0,363.0 422.0,385.0 428.0,390.0 428.0,406.0 417.0,416.0" fill="none" stroke="#a22626" stroke-width="2" />
<polyline points="454.0,359.0 454.0,395.0 459.0,406.0 459.0,416.0" fill="none" stroke="#a22626" stroke-width="2" />
<polyline points="501.0,359.0 501.0,416.0" fill="none" stroke="#a22626" stroke-width="2" />
<polyline points="548.0,359.0 548.0,411.0 543.0,416.0" fill="none" stroke="#a22626" stroke-width="2" />
<polyline points="410.0,317.0 433.0,317.0" fill="none" stroke="#b02850" stroke-width="2" />
<polyline points="457.0,317.0 480.0,317.0" fill="none" stroke="#b02850" stroke-width="2" />
<polyline points="504.0,317.0 527.0,317.0" fill="none" stroke="#b02850" stroke-width="2" />
<rect x="313.0" y="272.1" width="9.0" height="17.4" rx="4.5" fill="#22aa22" fill-opacity="0.88"/>
<rect x="334.0" y="272.1" width="9.0" height="17.4" rx="4.5" fill="#22aa22" fill-opacity="0.88"/>
<rect x="408.0" y="272.1" width="9.0" height="17.4" rx="4.5" fill="#22aa22" fill-opacity="0.88"/>
<rect x="429.0" y="272.1" width="9.0" height="17.4" rx="4.5" fill="#22aa22" fill-opacity="0.88"/>
<rect x="450.0" y="272.1" width="9.0" height="17.4" rx="4.5" fill="#22aa22" fill-opacity="0.88"/>
<rect x="471.0" y="272.1" width="9.0" height="17.4" rx="4.5" fill="#22aa22" fill-opacity="0.88"/>
<rect x="492.0" y="272.1" width="9.0" height="17.4" rx="4.5" fill="#22aa22" fill-opacity="0.88"/>
<rect x="513.0" y="272.1" width="9.0" height="17.4" rx="4.5" fill="#22aa22" fill-opacity="0.88"/>
<rect x="329.2" y="408.4" width="9.0" height="17.6" rx="4.5" fill="#22aa22" fill-opacity="0.88"/>
<rect x="350.2" y="408.4" width="9.0" height="17.6" rx="4.5" fill="#22aa22" fill-opacity="0.88"/>
<rect x="371.2" y="408.4" width="9.0" height="17.6" rx="4.5" fill="#22aa22" fill-opacity="0.88"/>
<rect x="392.2" y="408.4" width="9.0" height="17.6" rx="4.5" fill="#22aa22" fill-opacity="0.88"/>
<rect x="413.2" y="408.4" width="9.0" height="17.6" rx="4.5" fill="#22aa22" fill-opacity="0.88"/>
<rect x="434.2" y="408.4" width="9.0" height="17.6" rx="4.5" fill="#22aa22" fill-opacity="0.88"/>
<rect x="455.2" y="408.4" width="9.0" height="17.6" rx="4.5" fill="#22aa22" fill-opacity="0.88"/>
<rect x="476.2" y="408.4" width="9.0" height="17.6" rx="4.5" fill="#22aa22" fill-opacity="0.88"/>
<rect x="497.2" y="408.4" width="9.0" height="17.6" rx="4.5" fill="#22aa22" fill-opacity="0.88"/>
<rect x="518.2" y="408.4" width="9.0" height="17.6" rx="4.5" fill="#22aa22" fill-opacity="0.88"/>
<rect x="539.2" y="408.4" width="9.0" height="17.6" rx="4.5" fill="#22aa22" fill-opacity="0.88"/>
<rect x="560.2" y="408.4" width="9.0" height="17.6" rx="4.5" fill="#22aa22" fill-opacity="0.88"/>
<polygon points="335.4,344.9 344.4,344.9 344.4,351.9 335.4,351.9 332.4,349.4 332.4,347.4" fill="#1e961e"/>
<polygon points="335.4,355.9 344.4,355.9 344.4,362.9 335.4,362.9 332.4,360.4 332.4,358.4" fill="#1e961e"/>
<polygon points="335.4,365.9 344.4,365.9 344.4,372.9 335.4,372.9 332.4,370.4 332.4,368.4" fill="#1e961e"/>
<polygon points="383.4,344.9 392.4,344.9 392.4,351.9 383.4,351.9 380.4,349.4 380.4,347.4" fill="#1e961e"/>
<polygon points="383.4,355.9 392.4,355.9 392.4,362.9 383.4,362.9 380.4,360.4 380.4,358.4" fill="#1e961e"/>
<polygon points="383.4,365.9 392.4,365.9 392.4,372.9 383.4,372.9 380.4,370.4 380.4,368.4" fill="#1e961e"/>
<polygon points="430.4,344.9 439.4,344.9 439.4,351.9 430.4,351.9 427.4,349.4 427.4,347.4" fill="#1e961e"/>
<polygon points="430.4,355.9 439.4,355.9 439.4,362.9 430.4,362.9 427.4,360.4 427.4,358.4" fill="#1e961e"/>
<polygon points="430.4,365.9 439.4,365.9 439.4,372.9 430.4,372.9 427.4,370.4 427.4,368.4" fill="#1e961e"/>
<polygon points="477.4,344.9 486.4,344.9 486.4,351.9 477.4,351.9 474.4,349.4 474.4,347.4" fill="#1e961e"/>
<polygon points="477.4,355.9 486.4,355.9 486.4,362.9 477.4,362.9 474.4,360.4 474.4,358.4" fill="#1e961e"/>
<polygon points="477.4,365.9 486.4,365.9 486.4,372.9 477.4,372.9 474.4,370.4 474.4,368.4" fill="#1e961e"/>
<polygon points="524.4,344.9 533.4,344.9 533.4,351.9 524.4,351.9 521.4,349.4 521.4,347.4" fill="#1e961e"/>
<polygon points="524.4,355.9 533.4,355.9 533.4,362.9 524.4,362.9 521.4,360.4 521.4,358.4" fill="#1e961e"/>
<polygon points="524.4,365.9 533.4,365.9 533.4,372.9 524.4,372.9 521.4,370.4 521.4,368.4" fill="#1e961e"/>
<polygon points="571.4,344.9 580.4,344.9 580.4,351.9 571.4,351.9 568.4,349.4 568.4,347.4" fill="#1e961e"/>
<polygon points="571.4,355.9 580.4,355.9 580.4,362.9 571.4,362.9 568.4,360.4 568.4,358.4" fill="#1e961e"/>
<polygon points="571.4,365.9 580.4,365.9 580.4,372.9 571.4,372.9 568.4,370.4 568.4,368.4" fill="#1e961e"/>
<polygon points="326.5,297.7 324.7,299.5 322.1,299.5 320.3,297.7 320.3,295.1 322.1,293.3 324.7,293.3 326.5,295.1" fill="#1e961e"/><rect x="322.4" y="295.4" width="2" height="2" fill="#a8a8c4"/>
<polygon points="326.5,339.7 324.7,341.5 322.1,341.5 320.3,339.7 320.3,337.1 322.1,335.3 324.7,335.3 326.5,337.1" fill="#1e961e"/><rect x="322.4" y="337.4" width="2" height="2" fill="#a8a8c4"/>
<polygon points="326.5,349.7 324.7,351.5 322.1,351.5 320.3,349.7 320.3,347.1 322.1,345.3 324.7,345.3 326.5,347.1" fill="#1e961e"/><rect x="322.4" y="347.4" width="2" height="2" fill="#a8a8c4"/>
<polygon points="326.5,391.7 324.7,393.5 322.1,393.5 320.3,391.7 320.3,389.1 322.1,387.3 324.7,387.3 326.5,389.1" fill="#1e961e"/><rect x="322.4" y="389.4" width="2" height="2" fill="#a8a8c4"/>
<polygon points="315.5,318.7 313.7,320.5 311.1,320.5 309.3,318.7 309.3,316.1 311.1,314.3 313.7,314.3 315.5,316.1" fill="#1e961e"/><rect x="311.4" y="316.4" width="2" height="2" fill="#a8a8c4"/>
<polygon points="315.5,360.7 313.7,362.5 311.1,362.5 309.3,360.7 309.3,358.1 311.1,356.3 313.7,356.3 315.5,358.1" fill="#1e961e"/><rect x="311.4" y="358.4" width="2" height="2" fill="#a8a8c4"/>
<polygon points="373.5,297.7 371.7,299.5 369.1,299.5 367.3,297.7 367.3,295.1 369.1,293.3 371.7,293.3 373.5,295.1" fill="#1e961e"/><rect x="369.4" y="295.4" width="2" height="2" fill="#a8a8c4"/>
<polygon points="373.5,339.7 371.7,341.5 369.1,341.5 367.3,339.7 367.3,337.1 369.1,335.3 371.7,335.3 373.5,337.1" fill="#1e961e"/><rect x="369.4" y="337.4" width="2" height="2" fill="#a8a8c4"/>
<polygon points="373.5,349.7 371.7,351.5 369.1,351.5 367.3,349.7 367.3,347.1 369.1,345.3 371.7,345.3 373.5,347.1" fill="#1e961e"/><rect x="369.4" y="347.4" width="2" height="2" fill="#a8a8c4"/>
<polygon points="373.5,391.7 371.7,393.5 369.1,393.5 367.3,391.7 367.3,389.1 369.1,387.3 371.7,387.3 373.5,389.1" fill="#1e961e"/><rect x="369.4" y="389.4" width="2" height="2" fill="#a8a8c4"/>
<polygon points="362.5,318.7 360.7,320.5 358.1,320.5 356.3,318.7 356.3,316.1 358.1,314.3 360.7,314.3 362.5,316.1" fill="#1e961e"/><rect x="358.4" y="316.4" width="2" height="2" fill="#a8a8c4"/>
<polygon points="362.5,360.7 360.7,362.5 358.1,362.5 356.3,360.7 356.3,358.1 358.1,356.3 360.7,356.3 362.5,358.1" fill="#1e961e"/><rect x="358.4" y="358.4" width="2" height="2" fill="#a8a8c4"/>
<polygon points="420.5,297.7 418.7,299.5 416.1,299.5 414.3,297.7 414.3,295.1 416.1,293.3 418.7,293.3 420.5,295.1" fill="#1e961e"/><rect x="416.4" y="295.4" width="2" height="2" fill="#a8a8c4"/>
<polygon points="420.5,339.7 418.7,341.5 416.1,341.5 414.3,339.7 414.3,337.1 416.1,335.3 418.7,335.3 420.5,337.1" fill="#1e961e"/><rect x="416.4" y="337.4" width="2" height="2" fill="#a8a8c4"/>
<polygon points="420.5,349.7 418.7,351.5 416.1,351.5 414.3,349.7 414.3,347.1 416.1,345.3 418.7,345.3 420.5,347.1" fill="#1e961e"/><rect x="416.4" y="347.4" width="2" height="2" fill="#a8a8c4"/>
<polygon points="420.5,391.7 418.7,393.5 416.1,393.5 414.3,391.7 414.3,389.1 416.1,387.3 418.7,387.3 420.5,389.1" fill="#1e961e"/><rect x="416.4" y="389.4" width="2" height="2" fill="#a8a8c4"/>
<polygon points="410.5,318.7 408.7,320.5 406.1,320.5 404.3,318.7 404.3,316.1 406.1,314.3 408.7,314.3 410.5,316.1" fill="#1e961e"/><rect x="406.4" y="316.4" width="2" height="2" fill="#a8a8c4"/>
<polygon points="410.5,360.7 408.7,362.5 406.1,362.5 404.3,360.7 404.3,358.1 406.1,356.3 408.7,356.3 410.5,358.1" fill="#1e961e"/><rect x="406.4" y="358.4" width="2" height="2" fill="#a8a8c4"/>
<polygon points="467.5,297.7 465.7,299.5 463.1,299.5 461.3,297.7 461.3,295.1 463.1,293.3 465.7,293.3 467.5,295.1" fill="#1e961e"/><rect x="463.4" y="295.4" width="2" height="2" fill="#a8a8c4"/>
<polygon points="467.5,339.7 465.7,341.5 463.1,341.5 461.3,339.7 461.3,337.1 463.1,335.3 465.7,335.3 467.5,337.1" fill="#1e961e"/><rect x="463.4" y="337.4" width="2" height="2" fill="#a8a8c4"/>
<polygon points="467.5,349.7 465.7,351.5 463.1,351.5 461.3,349.7 461.3,347.1 463.1,345.3 465.7,345.3 467.5,347.1" fill="#1e961e"/><rect x="463.4" y="347.4" width="2" height="2" fill="#a8a8c4"/>
<polygon points="467.5,391.7 465.7,393.5 463.1,393.5 461.3,391.7 461.3,389.1 463.1,387.3 465.7,387.3 467.5,389.1" fill="#1e961e"/><rect x="463.4" y="389.4" width="2" height="2" fill="#a8a8c4"/>
<polygon points="457.5,318.7 455.7,320.5 453.1,320.5 451.3,318.7 451.3,316.1 453.1,314.3 455.7,314.3 457.5,316.1" fill="#1e961e"/><rect x="453.4" y="316.4" width="2" height="2" fill="#a8a8c4"/>
<polygon points="457.5,360.7 455.7,362.5 453.1,362.5 451.3,360.7 451.3,358.1 453.1,356.3 455.7,356.3 457.5,358.1" fill="#1e961e"/><rect x="453.4" y="358.4" width="2" height="2" fill="#a8a8c4"/>
<polygon points="514.5,297.7 512.7,299.5 510.1,299.5 508.3,297.7 508.3,295.1 510.1,293.3 512.7,293.3 514.5,295.1" fill="#1e961e"/><rect x="510.4" y="295.4" width="2" height="2" fill="#a8a8c4"/>
<polygon points="514.5,339.7 512.7,341.5 510.1,341.5 508.3,339.7 508.3,337.1 510.1,335.3 512.7,335.3 514.5,337.1" fill="#1e961e"/><rect x="510.4" y="337.4" width="2" height="2" fill="#a8a8c4"/>
<polygon points="514.5,349.7 512.7,351.5 510.1,351.5 508.3,349.7 508.3,347.1 510.1,345.3 512.7,345.3 514.5,347.1" fill="#1e961e"/><rect x="510.4" y="347.4" width="2" height="2" fill="#a8a8c4"/>
<polygon points="514.5,391.7 512.7,393.5 510.1,393.5 508.3,391.7 508.3,389.1 510.1,387.3 512.7,387.3 514.5,389.1" fill="#1e961e"/><rect x="510.4" y="389.4" width="2" height="2" fill="#a8a8c4"/>
<polygon points="504.5,318.7 502.7,320.5 500.1,320.5 498.3,318.7 498.3,316.1 500.1,314.3 502.7,314.3 504.5,316.1" fill="#1e961e"/><rect x="500.4" y="316.4" width="2" height="2" fill="#a8a8c4"/>
<polygon points="504.5,360.7 502.7,362.5 500.1,362.5 498.3,360.7 498.3,358.1 500.1,356.3 502.7,356.3 504.5,358.1" fill="#1e961e"/><rect x="500.4" y="358.4" width="2" height="2" fill="#a8a8c4"/>
<polygon points="562.5,297.7 560.7,299.5 558.1,299.5 556.3,297.7 556.3,295.1 558.1,293.3 560.7,293.3 562.5,295.1" fill="#1e961e"/><rect x="558.4" y="295.4" width="2" height="2" fill="#a8a8c4"/>
<polygon points="562.5,339.7 560.7,341.5 558.1,341.5 556.3,339.7 556.3,337.1 558.1,335.3 560.7,335.3 562.5,337.1" fill="#1e961e"/><rect x="558.4" y="337.4" width="2" height="2" fill="#a8a8c4"/>
<polygon points="562.5,349.7 560.7,351.5 558.1,351.5 556.3,349.7 556.3,347.1 558.1,345.3 560.7,345.3 562.5,347.1" fill="#1e961e"/><rect x="558.4" y="347.4" width="2" height="2" fill="#a8a8c4"/>
<polygon points="562.5,391.7 560.7,393.5 558.1,393.5 556.3,391.7 556.3,389.1 558.1,387.3 560.7,387.3 562.5,389.1" fill="#1e961e"/><rect x="558.4" y="389.4" width="2" height="2" fill="#a8a8c4"/>
<polygon points="551.5,318.7 549.7,320.5 547.1,320.5 545.3,318.7 545.3,316.1 547.1,314.3 549.7,314.3 551.5,316.1" fill="#1e961e"/><rect x="547.4" y="316.4" width="2" height="2" fill="#a8a8c4"/>
<polygon points="551.5,360.7 549.7,362.5 547.1,362.5 545.3,360.7 545.3,358.1 547.1,356.3 549.7,356.3 551.5,358.1" fill="#1e961e"/><rect x="547.4" y="358.4" width="2" height="2" fill="#a8a8c4"/>
<clipPath id="holes"><circle cx="317.5" cy="280.8" r="2.5"/><circle cx="338.5" cy="280.8" r="2.5"/><circle cx="412.5" cy="280.8" r="2.5"/><circle cx="433.5" cy="280.8" r="2.5"/><circle cx="454.5" cy="280.8" r="2.5"/><circle cx="475.5" cy="280.8" r="2.5"/><circle cx="496.5" cy="280.8" r="2.5"/><circle cx="517.5" cy="280.8" r="2.5"/><circle cx="333.5" cy="416.5" r="2.5"/><circle cx="354.5" cy="416.5" r="2.5"/><circle cx="375.5" cy="416.5" r="2.5"/><circle cx="396.5" cy="416.5" r="2.5"/><circle cx="417.5" cy="416.5" r="2.5"/><circle cx="438.5" cy="416.5" r="2.5"/><circle cx="459.5" cy="416.5" r="2.5"/><circle cx="480.5" cy="416.5" r="2.5"/><circle cx="501.5" cy="416.5" r="2.5"/><circle cx="522.5" cy="416.5" r="2.5"/><circle cx="543.5" cy="416.5" r="2.5"/><circle cx="564.5" cy="416.5" r="2.5"/></clipPath>
<circle cx="317.5" cy="280.8" r="2.5" fill="#000"/><circle cx="338.5" cy="280.8" r="2.5" fill="#000"/><circle cx="412.5" cy="280.8" r="2.5" fill="#000"/><circle cx="433.5" cy="280.8" r="2.5" fill="#000"/><circle cx="454.5" cy="280.8" r="2.5" fill="#000"/><circle cx="475.5" cy="280.8" r="2.5" fill="#000"/><circle cx="496.5" cy="280.8" r="2.5" fill="#000"/><circle cx="517.5" cy="280.8" r="2.5" fill="#000"/><circle cx="333.5" cy="416.5" r="2.5" fill="#000"/><circle cx="354.5" cy="416.5" r="2.5" fill="#000"/><circle cx="375.5" cy="416.5" r="2.5" fill="#000"/><circle cx="396.5" cy="416.5" r="2.5" fill="#000"/><circle cx="417.5" cy="416.5" r="2.5" fill="#000"/><circle cx="438.5" cy="416.5" r="2.5" fill="#000"/><circle cx="459.5" cy="416.5" r="2.5" fill="#000"/><circle cx="480.5" cy="416.5" r="2.5" fill="#000"/><circle cx="501.5" cy="416.5" r="2.5" fill="#000"/><circle cx="522.5" cy="416.5" r="2.5" fill="#000"/><circle cx="543.5" cy="416.5" r="2.5" fill="#000"/><circle cx="564.5" cy="416.5" r="2.5" fill="#000"/>
<g clip-path="url(#holes)"><polyline points="317.0,280.0 302.0,280.0 302.0,390.0 574.0,390.0 574.0,369.0" fill="none" stroke="#2626a8" stroke-width="2" /><polyline points="323.0,296.0 349.0,296.0 365.0,280.0 412.0,280.0" fill="none" stroke="#2626a8" stroke-width="2" /><polyline points="417.0,296.0 454.0,296.0 454.0,280.0" fill="none" stroke="#2626a8" stroke-width="2" /><polyline points="464.0,296.0 475.0,296.0 475.0,280.0" fill="none" stroke="#2626a8" stroke-width="2" /><polyline points="511.0,296.0 496.0,296.0 496.0,280.0" fill="none" stroke="#2626a8" stroke-width="2" /><polyline points="559.0,296.0 559.0,280.0 517.0,280.0" fill="none" stroke="#2626a8" stroke-width="2" /><polyline points="312.0,317.0 548.0,317.0" fill="none" stroke="#2626a8" stroke-width="2" /><polyline points="323.0,338.0 323.0,348.0 338.0,348.0" fill="none" stroke="#2626a8" stroke-width="2" /><polyline points="312.0,359.0 338.0,359.0" fill="none" stroke="#2626a8" stroke-width="2" /><polyline points="338.0,369.0 338.0,390.0" fill="none" stroke="#2626a8" stroke-width="2" /><polyline points="370.0,338.0 370.0,348.0 386.0,348.0" fill="none" stroke="#2626a8" stroke-width="2" /><polyline points="359.0,359.0 386.0,359.0" fill="none" stroke="#2626a8" stroke-width="2" /><polyline points="386.0,369.0 386.0,390.0" fill="none" stroke="#2626a8" stroke-width="2" /><polyline points="417.0,338.0 417.0,348.0 433.0,348.0" fill="none" stroke="#2626a8" stroke-width="2" /><polyline points="407.0,359.0 433.0,359.0" fill="none" stroke="#2626a8" stroke-width="2" /><polyline points="433.0,369.0 433.0,390.0" fill="none" stroke="#2626a8" stroke-width="2" /><polyline points="464.0,338.0 464.0,348.0 480.0,348.0" fill="none" stroke="#2626a8" stroke-width="2" /><polyline points="454.0,359.0 480.0,359.0" fill="none" stroke="#2626a8" stroke-width="2" /><polyline points="480.0,369.0 480.0,390.0" fill="none" stroke="#2626a8" stroke-width="2" /><polyline points="511.0,338.0 511.0,348.0 527.0,348.0" fill="none" stroke="#2626a8" stroke-width="2" /><polyline points="501.0,359.0 527.0,359.0" fill="none" stroke="#2626a8" stroke-width="2" /><polyline points="527.0,369.0 527.0,390.0" fill="none" stroke="#2626a8" stroke-width="2" /><polyline points="559.0,338.0 559.0,348.0 574.0,348.0" fill="none" stroke="#2626a8" stroke-width="2" /><polyline points="548.0,359.0 574.0,359.0" fill="none" stroke="#2626a8" stroke-width="2" /><polyline points="338.0,280.0 349.0,280.0 359.0,291.0 359.0,317.0" fill="none" stroke="#a22626" stroke-width="2" /><polyline points="433.0,280.0 433.0,265.0 386.0,265.0 370.0,280.0 370.0,296.0" fill="none" stroke="#a22626" stroke-width="2" /><polyline points="359.0,317.0 349.0,327.0 349.0,390.0 354.0,399.0 354.0,416.0" fill="none" stroke="#a22626" stroke-width="2" /><polyline points="407.0,317.0 396.0,327.0 396.0,416.0" fill="none" stroke="#a22626" stroke-width="2" /><polyline points="407.0,317.0 433.0,317.0 443.0,327.0 443.0,395.0 438.0,406.0 438.0,416.0" fill="none" stroke="#a22626" stroke-width="2" /><polyline points="454.0,317.0 480.0,317.0 490.0,327.0 490.0,401.0 480.0,411.0 480.0,416.0" fill="none" stroke="#a22626" stroke-width="2" /><polyline points="501.0,317.0 527.0,317.0 538.0,327.0 538.0,395.0 522.0,411.0 522.0,416.0" fill="none" stroke="#a22626" stroke-width="2" /><polyline points="548.0,317.0 574.0,317.0 585.0,327.0 585.0,390.0 564.0,411.0 564.0,416.0" fill="none" stroke="#a22626" stroke-width="2" /><polyline points="312.0,359.0 312.0,401.0 333.0,416.0" fill="none" stroke="#a22626" stroke-width="2" /><polyline points="386.0,359.0 379.0,359.0 375.0,363.0 375.0,380.0 380.0,385.0 380.0,395.0 375.0,401.0 375.0,416.0" fill="none" stroke="#a22626" stroke-width="2" /><polyline points="433.0,359.0 426.0,359.0 422.0,363.0 422.0,385.0 428.0,390.0 428.0,406.0 417.0,416.0" fill="none" stroke="#a22626" stroke-width="2" /><polyline points="454.0,359.0 454.0,395.0 459.0,406.0 459.0,416.0" fill="none" stroke="#a22626" stroke-width="2" /><polyline points="501.0,359.0 501.0,416.0" fill="none" stroke="#a22626" stroke-width="2" /><polyline points="548.0,359.0 548.0,411.0 543.0,416.0" fill="none" stroke="#a22626" stroke-width="2" /></g>
<rect x="337.0" y="347.0" width="2.0" height="2.0" fill="#2020a0"/>
<rect x="337.0" y="358.0" width="2.0" height="2.0" fill="#2020a0"/>
<rect x="337.0" y="368.0" width="2.0" height="2.0" fill="#2020a0"/>
<rect x="385.0" y="347.0" width="2.0" height="2.0" fill="#2020a0"/>
<rect x="385.0" y="358.0" width="2.0" height="2.0" fill="#2020a0"/>
<rect x="385.0" y="368.0" width="2.0" height="2.0" fill="#2020a0"/>
<rect x="432.0" y="347.0" width="2.0" height="2.0" fill="#2020a0"/>
<rect x="432.0" y="358.0" width="2.0" height="2.0" fill="#2020a0"/>
<rect x="432.0" y="368.0" width="2.0" height="2.0" fill="#2020a0"/>
<rect x="479.0" y="347.0" width="2.0" height="2.0" fill="#2020a0"/>
<rect x="479.0" y="358.0" width="2.0" height="2.0" fill="#2020a0"/>
<rect x="479.0" y="368.0" width="2.0" height="2.0" fill="#2020a0"/>
<rect x="526.0" y="347.0" width="2.0" height="2.0" fill="#2020a0"/>
<rect x="526.0" y="358.0" width="2.0" height="2.0" fill="#2020a0"/>
<rect x="526.0" y="368.0" width="2.0" height="2.0" fill="#2020a0"/>
<rect x="573.0" y="347.0" width="2.0" height="2.0" fill="#2020a0"/>
<rect x="573.0" y="358.0" width="2.0" height="2.0" fill="#2020a0"/>
<rect x="573.0" y="368.0" width="2.0" height="2.0" fill="#2020a0"/>
<rect x="322.0" y="299.4" width="2.8" height="4.6" fill="#b4b4b4"/>
<rect x="322.0" y="330.0" width="2.8" height="5.2" fill="#b4b4b4"/>
<rect x="318.5" y="304.5" width="9" height="26.0" fill="#000" fill-opacity="0" stroke="#c0c0c0"/>
<rect x="322.0" y="351.4" width="2.8" height="4.6" fill="#b4b4b4"/>
<rect x="322.0" y="382.0" width="2.8" height="5.2" fill="#b4b4b4"/>
<rect x="318.5" y="356.5" width="9" height="26.0" fill="#000" fill-opacity="0" stroke="#c0c0c0"/>
<rect x="310.4" y="320.0" width="4.0" height="10.0" fill="#a8a8a8"/>
<rect x="310.4" y="346.0" width="4.0" height="10.0" fill="#a8a8a8"/>
<rect x="307.5" y="329.5" width="10" height="17" fill="#000" stroke="#c0c0c0"/>
<rect x="308.0" y="330.0" width="9.0" height="4.0" fill="#a0a0a0"/>
<path d="M312.6 336V345M309.4 338.5H316.4" stroke="#f0f0f0" fill="none"/><path d="M310.4 342.5L312.9 339L315.4 342.5Z" stroke="#d8d8d8" stroke-width="0.8" fill="none" shape-rendering="geometricPrecision"/>
<path d="M344.0 338.5H331.5V379.5H344.0M331.5 338.5V379.5" stroke="#c0c0c0" fill="none"/>
<rect x="344.0" y="337.0" width="4.0" height="44.5" fill="#a4a4a4"/>
<rect x="348.0" y="337.0" width="2.0" height="44.5" fill="#caa6a6"/>
<path d="M346.0 359.5H353.0M349.5 356.0V363.0" stroke="#e8e8e8" stroke-width="1" fill="none"/>
<path d="M321.0 317.5H326.0M323.5 315.0V320.0" stroke="#e0e0e0" stroke-width="1" fill="none"/>
<path d="M322.0 369.5H327.0M324.5 367.0V372.0" stroke="#e0e0e0" stroke-width="1" fill="none"/>
<text x="305.1" y="353.5" font-size="5.6" fill="#e0e0e0" text-anchor="start" transform="rotate(-90 305.1 353.5)" textLength="24.5" lengthAdjust="spacingAndGlyphs">1N4004</text>
<text x="325.9" y="328.0" font-size="5.4" fill="#e8e8e8" text-anchor="start" transform="rotate(-90 325.9 328.0)">1k</text>
<text x="325.9" y="367.0" font-size="5.4" fill="#e8e8e8" text-anchor="start" transform="rotate(-90 325.9 367.0)">1k</text>
<text x="314.9" y="328.0" font-size="5.4" fill="#e0e0e0" text-anchor="start" transform="rotate(-90 314.9 328.0)">D1</text>
<text x="320.4" y="338.0" font-size="5.2" fill="#d8d8d8" text-anchor="start" transform="rotate(-90 320.4 338.0)">R1</text>
<text x="320.4" y="357.0" font-size="5.2" fill="#d8d8d8" text-anchor="start" transform="rotate(-90 320.4 357.0)">R2</text>
<text x="333.4" y="345.0" font-size="5.2" fill="#d0d0d0" text-anchor="start" transform="rotate(-35 333.4 345.0)">Q1</text>
<rect x="369.0" y="299.4" width="2.8" height="4.6" fill="#b4b4b4"/>
<rect x="369.0" y="330.0" width="2.8" height="5.2" fill="#b4b4b4"/>
<rect x="365.5" y="304.5" width="9" height="26.0" fill="#000" fill-opacity="0" stroke="#c0c0c0"/>
<rect x="369.0" y="351.4" width="2.8" height="4.6" fill="#b4b4b4"/>
<rect x="369.0" y="382.0" width="2.8" height="5.2" fill="#b4b4b4"/>
<rect x="365.5" y="356.5" width="9" height="26.0" fill="#000" fill-opacity="0" stroke="#c0c0c0"/>
<rect x="357.4" y="320.0" width="4.0" height="10.0" fill="#a8a8a8"/>
<rect x="357.4" y="346.0" width="4.0" height="10.0" fill="#a8a8a8"/>
<rect x="354.5" y="329.5" width="10" height="17" fill="#000" stroke="#c0c0c0"/>
<rect x="355.0" y="330.0" width="9.0" height="4.0" fill="#a0a0a0"/>
<path d="M359.6 336V345M356.4 338.5H363.4" stroke="#f0f0f0" fill="none"/><path d="M357.4 342.5L359.9 339L362.4 342.5Z" stroke="#d8d8d8" stroke-width="0.8" fill="none" shape-rendering="geometricPrecision"/>
<path d="M392.0 338.5H379.5V379.5H392.0M379.5 338.5V379.5" stroke="#c0c0c0" fill="none"/>
<rect x="391.0" y="337.0" width="4.0" height="44.5" fill="#a4a4a4"/>
<rect x="395.0" y="337.0" width="2.0" height="44.5" fill="#caa6a6"/>
<path d="M394.0 359.5H401.0M397.5 356.0V363.0" stroke="#e8e8e8" stroke-width="1" fill="none"/>
<path d="M368.0 317.5H373.0M370.5 315.0V320.0" stroke="#e0e0e0" stroke-width="1" fill="none"/>
<path d="M369.0 369.5H374.0M371.5 367.0V372.0" stroke="#e0e0e0" stroke-width="1" fill="none"/>
<text x="352.1" y="353.5" font-size="5.6" fill="#e0e0e0" text-anchor="start" transform="rotate(-90 352.1 353.5)" textLength="24.5" lengthAdjust="spacingAndGlyphs">1N4004</text>
<text x="372.9" y="328.0" font-size="5.4" fill="#e8e8e8" text-anchor="start" transform="rotate(-90 372.9 328.0)">1k</text>
<text x="372.9" y="367.0" font-size="5.4" fill="#e8e8e8" text-anchor="start" transform="rotate(-90 372.9 367.0)">1k</text>
<text x="361.9" y="328.0" font-size="5.4" fill="#e0e0e0" text-anchor="start" transform="rotate(-90 361.9 328.0)">D2</text>
<text x="367.4" y="338.0" font-size="5.2" fill="#d8d8d8" text-anchor="start" transform="rotate(-90 367.4 338.0)">R3</text>
<text x="367.4" y="357.0" font-size="5.2" fill="#d8d8d8" text-anchor="start" transform="rotate(-90 367.4 357.0)">R4</text>
<text x="381.4" y="345.0" font-size="5.2" fill="#d0d0d0" text-anchor="start" transform="rotate(-35 381.4 345.0)">Q2</text>
<rect x="416.0" y="299.4" width="2.8" height="4.6" fill="#b4b4b4"/>
<rect x="416.0" y="330.0" width="2.8" height="5.2" fill="#b4b4b4"/>
<rect x="412.5" y="304.5" width="9" height="26.0" fill="#000" fill-opacity="0" stroke="#c0c0c0"/>
<rect x="416.0" y="351.4" width="2.8" height="4.6" fill="#b4b4b4"/>
<rect x="416.0" y="382.0" width="2.8" height="5.2" fill="#b4b4b4"/>
<rect x="412.5" y="356.5" width="9" height="26.0" fill="#000" fill-opacity="0" stroke="#c0c0c0"/>
<rect x="405.4" y="320.0" width="4.0" height="10.0" fill="#a8a8a8"/>
<rect x="405.4" y="346.0" width="4.0" height="10.0" fill="#a8a8a8"/>
<rect x="402.5" y="329.5" width="10" height="17" fill="#000" stroke="#c0c0c0"/>
<rect x="403.0" y="330.0" width="9.0" height="4.0" fill="#a0a0a0"/>
<path d="M407.6 336V345M404.4 338.5H411.4" stroke="#f0f0f0" fill="none"/><path d="M405.4 342.5L407.9 339L410.4 342.5Z" stroke="#d8d8d8" stroke-width="0.8" fill="none" shape-rendering="geometricPrecision"/>
<path d="M439.0 338.5H426.5V379.5H439.0M426.5 338.5V379.5" stroke="#c0c0c0" fill="none"/>
<rect x="438.0" y="337.0" width="4.0" height="44.5" fill="#a4a4a4"/>
<rect x="442.0" y="337.0" width="2.0" height="44.5" fill="#caa6a6"/>
<path d="M441.0 359.5H448.0M444.5 356.0V363.0" stroke="#e8e8e8" stroke-width="1" fill="none"/>
<path d="M415.0 317.5H420.0M417.5 315.0V320.0" stroke="#e0e0e0" stroke-width="1" fill="none"/>
<path d="M416.0 369.5H421.0M418.5 367.0V372.0" stroke="#e0e0e0" stroke-width="1" fill="none"/>
<text x="400.1" y="353.5" font-size="5.6" fill="#e0e0e0" text-anchor="start" transform="rotate(-90 400.1 353.5)" textLength="24.5" lengthAdjust="spacingAndGlyphs">1N4004</text>
<text x="419.9" y="328.0" font-size="5.4" fill="#e8e8e8" text-anchor="start" transform="rotate(-90 419.9 328.0)">1k</text>
<text x="419.9" y="367.0" font-size="5.4" fill="#e8e8e8" text-anchor="start" transform="rotate(-90 419.9 367.0)">1k</text>
<text x="409.9" y="328.0" font-size="5.4" fill="#e0e0e0" text-anchor="start" transform="rotate(-90 409.9 328.0)">D3</text>
<text x="414.4" y="338.0" font-size="5.2" fill="#d8d8d8" text-anchor="start" transform="rotate(-90 414.4 338.0)">R5</text>
<text x="414.4" y="357.0" font-size="5.2" fill="#d8d8d8" text-anchor="start" transform="rotate(-90 414.4 357.0)">R6</text>
<text x="428.4" y="345.0" font-size="5.2" fill="#d0d0d0" text-anchor="start" transform="rotate(-35 428.4 345.0)">Q3</text>
<rect x="463.0" y="299.4" width="2.8" height="4.6" fill="#b4b4b4"/>
<rect x="463.0" y="330.0" width="2.8" height="5.2" fill="#b4b4b4"/>
<rect x="459.5" y="304.5" width="9" height="26.0" fill="#000" fill-opacity="0" stroke="#c0c0c0"/>
<rect x="463.0" y="351.4" width="2.8" height="4.6" fill="#b4b4b4"/>
<rect x="463.0" y="382.0" width="2.8" height="5.2" fill="#b4b4b4"/>
<rect x="459.5" y="356.5" width="9" height="26.0" fill="#000" fill-opacity="0" stroke="#c0c0c0"/>
<rect x="452.4" y="320.0" width="4.0" height="10.0" fill="#a8a8a8"/>
<rect x="452.4" y="346.0" width="4.0" height="10.0" fill="#a8a8a8"/>
<rect x="449.5" y="329.5" width="10" height="17" fill="#000" stroke="#c0c0c0"/>
<rect x="450.0" y="330.0" width="9.0" height="4.0" fill="#a0a0a0"/>
<path d="M454.6 336V345M451.4 338.5H458.4" stroke="#f0f0f0" fill="none"/><path d="M452.4 342.5L454.9 339L457.4 342.5Z" stroke="#d8d8d8" stroke-width="0.8" fill="none" shape-rendering="geometricPrecision"/>
<path d="M486.0 338.5H473.5V379.5H486.0M473.5 338.5V379.5" stroke="#c0c0c0" fill="none"/>
<rect x="485.0" y="337.0" width="4.0" height="44.5" fill="#a4a4a4"/>
<rect x="489.0" y="337.0" width="2.0" height="44.5" fill="#caa6a6"/>
<path d="M488.0 359.5H495.0M491.5 356.0V363.0" stroke="#e8e8e8" stroke-width="1" fill="none"/>
<path d="M462.0 317.5H467.0M464.5 315.0V320.0" stroke="#e0e0e0" stroke-width="1" fill="none"/>
<path d="M463.0 369.5H468.0M465.5 367.0V372.0" stroke="#e0e0e0" stroke-width="1" fill="none"/>
<text x="447.1" y="353.5" font-size="5.6" fill="#e0e0e0" text-anchor="start" transform="rotate(-90 447.1 353.5)" textLength="24.5" lengthAdjust="spacingAndGlyphs">1N4004</text>
<text x="466.9" y="328.0" font-size="5.4" fill="#e8e8e8" text-anchor="start" transform="rotate(-90 466.9 328.0)">1k</text>
<text x="466.9" y="367.0" font-size="5.4" fill="#e8e8e8" text-anchor="start" transform="rotate(-90 466.9 367.0)">1k</text>
<text x="456.9" y="328.0" font-size="5.4" fill="#e0e0e0" text-anchor="start" transform="rotate(-90 456.9 328.0)">D4</text>
<text x="461.4" y="338.0" font-size="5.2" fill="#d8d8d8" text-anchor="start" transform="rotate(-90 461.4 338.0)">R7</text>
<text x="461.4" y="357.0" font-size="5.2" fill="#d8d8d8" text-anchor="start" transform="rotate(-90 461.4 357.0)">R8</text>
<text x="475.4" y="345.0" font-size="5.2" fill="#d0d0d0" text-anchor="start" transform="rotate(-35 475.4 345.0)">Q4</text>
<rect x="510.0" y="299.4" width="2.8" height="4.6" fill="#b4b4b4"/>
<rect x="510.0" y="330.0" width="2.8" height="5.2" fill="#b4b4b4"/>
<rect x="506.5" y="304.5" width="9" height="26.0" fill="#000" fill-opacity="0" stroke="#c0c0c0"/>
<rect x="510.0" y="351.4" width="2.8" height="4.6" fill="#b4b4b4"/>
<rect x="510.0" y="382.0" width="2.8" height="5.2" fill="#b4b4b4"/>
<rect x="506.5" y="356.5" width="9" height="26.0" fill="#000" fill-opacity="0" stroke="#c0c0c0"/>
<rect x="499.4" y="320.0" width="4.0" height="10.0" fill="#a8a8a8"/>
<rect x="499.4" y="346.0" width="4.0" height="10.0" fill="#a8a8a8"/>
<rect x="496.5" y="329.5" width="10" height="17" fill="#000" stroke="#c0c0c0"/>
<rect x="497.0" y="330.0" width="9.0" height="4.0" fill="#a0a0a0"/>
<path d="M501.6 336V345M498.4 338.5H505.4" stroke="#f0f0f0" fill="none"/><path d="M499.4 342.5L501.9 339L504.4 342.5Z" stroke="#d8d8d8" stroke-width="0.8" fill="none" shape-rendering="geometricPrecision"/>
<path d="M533.0 338.5H520.5V379.5H533.0M520.5 338.5V379.5" stroke="#c0c0c0" fill="none"/>
<rect x="533.0" y="337.0" width="4.0" height="44.5" fill="#a4a4a4"/>
<rect x="537.0" y="337.0" width="2.0" height="44.5" fill="#caa6a6"/>
<path d="M535.0 359.5H542.0M538.5 356.0V363.0" stroke="#e8e8e8" stroke-width="1" fill="none"/>
<path d="M509.0 317.5H514.0M511.5 315.0V320.0" stroke="#e0e0e0" stroke-width="1" fill="none"/>
<path d="M510.0 369.5H515.0M512.5 367.0V372.0" stroke="#e0e0e0" stroke-width="1" fill="none"/>
<text x="494.1" y="353.5" font-size="5.6" fill="#e0e0e0" text-anchor="start" transform="rotate(-90 494.1 353.5)" textLength="24.5" lengthAdjust="spacingAndGlyphs">1N4004</text>
<text x="513.9" y="328.0" font-size="5.4" fill="#e8e8e8" text-anchor="start" transform="rotate(-90 513.9 328.0)">1k</text>
<text x="513.9" y="367.0" font-size="5.4" fill="#e8e8e8" text-anchor="start" transform="rotate(-90 513.9 367.0)">1k</text>
<text x="503.9" y="328.0" font-size="5.4" fill="#e0e0e0" text-anchor="start" transform="rotate(-90 503.9 328.0)">D5</text>
<text x="508.4" y="338.0" font-size="5.2" fill="#d8d8d8" text-anchor="start" transform="rotate(-90 508.4 338.0)">R9</text>
<text x="508.4" y="357.0" font-size="5.2" fill="#d8d8d8" text-anchor="start" transform="rotate(-90 508.4 357.0)">R10</text>
<text x="522.4" y="345.0" font-size="5.2" fill="#d0d0d0" text-anchor="start" transform="rotate(-35 522.4 345.0)">Q5</text>
<rect x="558.0" y="299.4" width="2.8" height="4.6" fill="#b4b4b4"/>
<rect x="558.0" y="330.0" width="2.8" height="5.2" fill="#b4b4b4"/>
<rect x="554.5" y="304.5" width="9" height="26.0" fill="#000" fill-opacity="0" stroke="#c0c0c0"/>
<rect x="558.0" y="351.4" width="2.8" height="4.6" fill="#b4b4b4"/>
<rect x="558.0" y="382.0" width="2.8" height="5.2" fill="#b4b4b4"/>
<rect x="554.5" y="356.5" width="9" height="26.0" fill="#000" fill-opacity="0" stroke="#c0c0c0"/>
<rect x="546.4" y="320.0" width="4.0" height="10.0" fill="#a8a8a8"/>
<rect x="546.4" y="346.0" width="4.0" height="10.0" fill="#a8a8a8"/>
<rect x="543.5" y="329.5" width="10" height="17" fill="#000" stroke="#c0c0c0"/>
<rect x="544.0" y="330.0" width="9.0" height="4.0" fill="#a0a0a0"/>
<path d="M548.6 336V345M545.4 338.5H552.4" stroke="#f0f0f0" fill="none"/><path d="M546.4 342.5L548.9 339L551.4 342.5Z" stroke="#d8d8d8" stroke-width="0.8" fill="none" shape-rendering="geometricPrecision"/>
<path d="M580.0 338.5H567.5V379.5H580.0M567.5 338.5V379.5" stroke="#c0c0c0" fill="none"/>
<rect x="580.0" y="337.0" width="4.0" height="44.5" fill="#a4a4a4"/>
<rect x="584.0" y="337.0" width="2.0" height="44.5" fill="#caa6a6"/>
<path d="M582.0 359.5H589.0M585.5 356.0V363.0" stroke="#e8e8e8" stroke-width="1" fill="none"/>
<path d="M557.0 317.5H562.0M559.5 315.0V320.0" stroke="#e0e0e0" stroke-width="1" fill="none"/>
<path d="M558.0 369.5H563.0M560.5 367.0V372.0" stroke="#e0e0e0" stroke-width="1" fill="none"/>
<text x="541.1" y="353.5" font-size="5.6" fill="#e0e0e0" text-anchor="start" transform="rotate(-90 541.1 353.5)" textLength="24.5" lengthAdjust="spacingAndGlyphs">1N4004</text>
<text x="561.9" y="328.0" font-size="5.4" fill="#e8e8e8" text-anchor="start" transform="rotate(-90 561.9 328.0)">1k</text>
<text x="561.9" y="367.0" font-size="5.4" fill="#e8e8e8" text-anchor="start" transform="rotate(-90 561.9 367.0)">1k</text>
<text x="550.9" y="328.0" font-size="5.4" fill="#e0e0e0" text-anchor="start" transform="rotate(-90 550.9 328.0)">D6</text>
<text x="556.4" y="338.0" font-size="5.2" fill="#d8d8d8" text-anchor="start" transform="rotate(-90 556.4 338.0)">R11</text>
<text x="556.4" y="357.0" font-size="5.2" fill="#d8d8d8" text-anchor="start" transform="rotate(-90 556.4 357.0)">R12</text>
<text x="569.4" y="345.0" font-size="5.2" fill="#d0d0d0" text-anchor="start" transform="rotate(-35 569.4 345.0)">Q6</text>
<text x="307.5" y="266.3" font-size="9.4" fill="#d4d4d4" text-anchor="start" textLength="41.0" lengthAdjust="spacingAndGlyphs">MSTBA2</text>
<text x="486.5" y="266.3" font-size="9.4" fill="#d4d4d4" text-anchor="start" textLength="40.5" lengthAdjust="spacingAndGlyphs">MSTBA6</text>
<text x="323.5" y="437.3" font-size="9.4" fill="#d4d4d4" text-anchor="start" textLength="45.5" lengthAdjust="spacingAndGlyphs">MSTBA12</text>
<text x="340.5" y="297.5" font-size="9.4" fill="#d4d4d4" text-anchor="start" textLength="10.5" lengthAdjust="spacingAndGlyphs">X1</text>
<text x="519.5" y="297.5" font-size="9.4" fill="#d4d4d4" text-anchor="start" textLength="10.5" lengthAdjust="spacingAndGlyphs">X3</text>
<text x="319.0" y="405.6" font-size="9.4" fill="#d4d4d4" text-anchor="start" textLength="11.0" lengthAdjust="spacingAndGlyphs">X2</text>
<text x="323.3" y="283.0" font-size="6.4" fill="#dcdcdc" text-anchor="start">2</text>
<text x="344.0" y="283.0" font-size="6.4" fill="#dcdcdc" text-anchor="start">1</text>
<text x="418.0" y="283.0" font-size="6.4" fill="#dcdcdc" text-anchor="start">6</text>
<text x="439.0" y="283.0" font-size="6.4" fill="#dcdcdc" text-anchor="start">5</text>
<text x="460.0" y="283.0" font-size="6.4" fill="#dcdcdc" text-anchor="start">4</text>
<text x="481.0" y="283.0" font-size="6.4" fill="#dcdcdc" text-anchor="start">3</text>
<text x="502.0" y="283.0" font-size="6.4" fill="#dcdcdc" text-anchor="start">2</text>
<text x="523.0" y="283.0" font-size="6.4" fill="#dcdcdc" text-anchor="start">1</text>
<text x="328.0" y="419.0" font-size="6.4" fill="#dcdcdc" text-anchor="end">1</text>
<text x="349.0" y="419.0" font-size="6.4" fill="#dcdcdc" text-anchor="end">2</text>
<text x="370.0" y="419.0" font-size="6.4" fill="#dcdcdc" text-anchor="end">3</text>
<text x="391.0" y="419.0" font-size="6.4" fill="#dcdcdc" text-anchor="end">4</text>
<text x="412.0" y="419.0" font-size="6.4" fill="#dcdcdc" text-anchor="end">5</text>
<text x="433.0" y="419.0" font-size="6.4" fill="#dcdcdc" text-anchor="end">6</text>
<text x="454.0" y="419.0" font-size="6.4" fill="#dcdcdc" text-anchor="end">7</text>
<text x="475.0" y="419.0" font-size="6.4" fill="#dcdcdc" text-anchor="end">8</text>
<text x="496.0" y="419.0" font-size="6.4" fill="#dcdcdc" text-anchor="end">9</text>
<text x="517.0" y="419.0" font-size="6.4" fill="#dcdcdc" text-anchor="end">10</text>
<text x="538.0" y="419.0" font-size="6.4" fill="#dcdcdc" text-anchor="end">11</text>
<text x="559.0" y="419.0" font-size="6.4" fill="#dcdcdc" text-anchor="end">12</text>
<path d="M322 259.5H334M328.5 254V266" stroke="#cccccc" stroke-width="1" fill="none"/>
<path d="M459 259.5H471M464.5 254V266" stroke="#cccccc" stroke-width="1" fill="none"/>
<path d="M443 437.5H455M449.5 432V444" stroke="#cccccc" stroke-width="1" fill="none"/>
<rect x="256" y="474" width="1" height="1" fill="#fff"/>
<rect x="265" y="465" width="1" height="1" fill="#fff"/>
<rect x="258" y="474" width="1" height="1" fill="#fff"/>
<rect x="265" y="467" width="1" height="1" fill="#fff"/>
<rect x="260" y="474" width="1" height="1" fill="#fff"/>
<rect x="265" y="469" width="1" height="1" fill="#fff"/>
<rect x="262" y="474" width="1" height="1" fill="#fff"/>
<rect x="265" y="471" width="1" height="1" fill="#fff"/>
<rect x="264" y="474" width="1" height="1" fill="#fff"/>
<rect x="265" y="473" width="1" height="1" fill="#fff"/>
<rect x="266" y="474" width="1" height="1" fill="#fff"/>
<rect x="265" y="475" width="1" height="1" fill="#fff"/>
<rect x="268" y="474" width="1" height="1" fill="#fff"/>
<rect x="265" y="477" width="1" height="1" fill="#fff"/>
<rect x="270" y="474" width="1" height="1" fill="#fff"/>
<rect x="265" y="479" width="1" height="1" fill="#fff"/>
<rect x="272" y="474" width="1" height="1" fill="#fff"/>
<rect x="265" y="481" width="1" height="1" fill="#fff"/>
<rect x="274" y="474" width="1" height="1" fill="#fff"/>
<rect x="265" y="483" width="1" height="1" fill="#fff"/></g>
<defs><g id="gr"><rect x="66" y="0" width="1" height="1"/><rect x="71" y="0" width="1" height="1"/><rect x="76" y="0" width="1" height="1"/><rect x="81" y="0" width="1" height="1"/><rect x="87" y="0" width="1" height="1"/><rect x="92" y="0" width="1" height="1"/><rect x="97" y="0" width="1" height="1"/><rect x="102" y="0" width="1" height="1"/><rect x="108" y="0" width="1" height="1"/><rect x="113" y="0" width="1" height="1"/><rect x="118" y="0" width="1" height="1"/><rect x="123" y="0" width="1" height="1"/><rect x="129" y="0" width="1" height="1"/><rect x="134" y="0" width="1" height="1"/><rect x="139" y="0" width="1" height="1"/><rect x="144" y="0" width="1" height="1"/><rect x="150" y="0" width="1" height="1"/><rect x="155" y="0" width="1" height="1"/><rect x="160" y="0" width="1" height="1"/><rect x="165" y="0" width="1" height="1"/><rect x="171" y="0" width="1" height="1"/><rect x="176" y="0" width="1" height="1"/><rect x="181" y="0" width="1" height="1"/><rect x="186" y="0" width="1" height="1"/><rect x="192" y="0" width="1" height="1"/><rect x="197" y="0" width="1" height="1"/><rect x="202" y="0" width="1" height="1"/><rect x="207" y="0" width="1" height="1"/><rect x="213" y="0" width="1" height="1"/><rect x="218" y="0" width="1" height="1"/><rect x="223" y="0" width="1" height="1"/><rect x="228" y="0" width="1" height="1"/><rect x="233" y="0" width="1" height="1"/><rect x="239" y="0" width="1" height="1"/><rect x="244" y="0" width="1" height="1"/><rect x="249" y="0" width="1" height="1"/><rect x="254" y="0" width="1" height="1"/><rect x="260" y="0" width="1" height="1"/><rect x="265" y="0" width="1" height="1"/><rect x="270" y="0" width="1" height="1"/><rect x="275" y="0" width="1" height="1"/><rect x="281" y="0" width="1" height="1"/><rect x="286" y="0" width="1" height="1"/><rect x="291" y="0" width="1" height="1"/><rect x="296" y="0" width="1" height="1"/><rect x="302" y="0" width="1" height="1"/><rect x="307" y="0" width="1" height="1"/><rect x="312" y="0" width="1" height="1"/><rect x="317" y="0" width="1" height="1"/><rect x="323" y="0" width="1" height="1"/><rect x="328" y="0" width="1" height="1"/><rect x="333" y="0" width="1" height="1"/><rect x="338" y="0" width="1" height="1"/><rect x="344" y="0" width="1" height="1"/><rect x="349" y="0" width="1" height="1"/><rect x="354" y="0" width="1" height="1"/><rect x="359" y="0" width="1" height="1"/><rect x="365" y="0" width="1" height="1"/><rect x="370" y="0" width="1" height="1"/><rect x="375" y="0" width="1" height="1"/><rect x="380" y="0" width="1" height="1"/><rect x="386" y="0" width="1" height="1"/><rect x="391" y="0" width="1" height="1"/><rect x="396" y="0" width="1" height="1"/><rect x="401" y="0" width="1" height="1"/><rect x="407" y="0" width="1" height="1"/><rect x="412" y="0" width="1" height="1"/><rect x="417" y="0" width="1" height="1"/><rect x="422" y="0" width="1" height="1"/><rect x="428" y="0" width="1" height="1"/><rect x="433" y="0" width="1" height="1"/><rect x="438" y="0" width="1" height="1"/><rect x="443" y="0" width="1" height="1"/><rect x="449" y="0" width="1" height="1"/><rect x="454" y="0" width="1" height="1"/><rect x="459" y="0" width="1" height="1"/><rect x="464" y="0" width="1" height="1"/><rect x="469" y="0" width="1" height="1"/><rect x="475" y="0" width="1" height="1"/><rect x="480" y="0" width="1" height="1"/><rect x="485" y="0" width="1" height="1"/><rect x="490" y="0" width="1" height="1"/><rect x="496" y="0" width="1" height="1"/><rect x="501" y="0" width="1" height="1"/><rect x="506" y="0" width="1" height="1"/><rect x="511" y="0" width="1" height="1"/><rect x="517" y="0" width="1" height="1"/><rect x="522" y="0" width="1" height="1"/><rect x="527" y="0" width="1" height="1"/><rect x="532" y="0" width="1" height="1"/><rect x="538" y="0" width="1" height="1"/><rect x="543" y="0" width="1" height="1"/><rect x="548" y="0" width="1" height="1"/><rect x="553" y="0" width="1" height="1"/><rect x="559" y="0" width="1" height="1"/><rect x="564" y="0" width="1" height="1"/><rect x="569" y="0" width="1" height="1"/><rect x="574" y="0" width="1" height="1"/><rect x="580" y="0" width="1" height="1"/><rect x="585" y="0" width="1" height="1"/><rect x="590" y="0" width="1" height="1"/><rect x="595" y="0" width="1" height="1"/><rect x="601" y="0" width="1" height="1"/><rect x="606" y="0" width="1" height="1"/><rect x="611" y="0" width="1" height="1"/><rect x="616" y="0" width="1" height="1"/><rect x="622" y="0" width="1" height="1"/><rect x="627" y="0" width="1" height="1"/><rect x="632" y="0" width="1" height="1"/><rect x="637" y="0" width="1" height="1"/><rect x="643" y="0" width="1" height="1"/><rect x="648" y="0" width="1" height="1"/><rect x="653" y="0" width="1" height="1"/><rect x="658" y="0" width="1" height="1"/><rect x="664" y="0" width="1" height="1"/><rect x="669" y="0" width="1" height="1"/><rect x="674" y="0" width="1" height="1"/><rect x="679" y="0" width="1" height="1"/><rect x="685" y="0" width="1" height="1"/><rect x="690" y="0" width="1" height="1"/><rect x="695" y="0" width="1" height="1"/><rect x="700" y="0" width="1" height="1"/><rect x="706" y="0" width="1" height="1"/><rect x="711" y="0" width="1" height="1"/><rect x="716" y="0" width="1" height="1"/><rect x="721" y="0" width="1" height="1"/><rect x="726" y="0" width="1" height="1"/><rect x="732" y="0" width="1" height="1"/><rect x="737" y="0" width="1" height="1"/><rect x="742" y="0" width="1" height="1"/><rect x="747" y="0" width="1" height="1"/><rect x="753" y="0" width="1" height="1"/><rect x="758" y="0" width="1" height="1"/><rect x="763" y="0" width="1" height="1"/><rect x="768" y="0" width="1" height="1"/><rect x="774" y="0" width="1" height="1"/><rect x="779" y="0" width="1" height="1"/><rect x="784" y="0" width="1" height="1"/><rect x="789" y="0" width="1" height="1"/><rect x="795" y="0" width="1" height="1"/><rect x="800" y="0" width="1" height="1"/><rect x="805" y="0" width="1" height="1"/><rect x="810" y="0" width="1" height="1"/></g></defs>
<g fill="#ffffff" fill-opacity="0.557"><use href="#gr" y="113"/><use href="#gr" y="118"/><use href="#gr" y="123"/><use href="#gr" y="128"/><use href="#gr" y="134"/><use href="#gr" y="139"/><use href="#gr" y="144"/><use href="#gr" y="149"/><use href="#gr" y="155"/><use href="#gr" y="160"/><use href="#gr" y="165"/><use href="#gr" y="170"/><use href="#gr" y="176"/><use href="#gr" y="181"/><use href="#gr" y="186"/><use href="#gr" y="191"/><use href="#gr" y="196"/><use href="#gr" y="202"/><use href="#gr" y="207"/><use href="#gr" y="212"/><use href="#gr" y="217"/><use href="#gr" y="223"/><use href="#gr" y="228"/><use href="#gr" y="233"/><use href="#gr" y="238"/><use href="#gr" y="244"/><use href="#gr" y="249"/><use href="#gr" y="254"/><use href="#gr" y="259"/><use href="#gr" y="265"/><use href="#gr" y="270"/><use href="#gr" y="275"/><use href="#gr" y="280"/><use href="#gr" y="285"/><use href="#gr" y="291"/><use href="#gr" y="296"/><use href="#gr" y="301"/><use href="#gr" y="306"/><use href="#gr" y="312"/><use href="#gr" y="317"/><use href="#gr" y="322"/><use href="#gr" y="327"/><use href="#gr" y="333"/><use href="#gr" y="338"/><use href="#gr" y="343"/><use href="#gr" y="348"/><use href="#gr" y="354"/><use href="#gr" y="359"/><use href="#gr" y="364"/><use href="#gr" y="369"/><use href="#gr" y="375"/><use href="#gr" y="380"/><use href="#gr" y="385"/><use href="#gr" y="390"/><use href="#gr" y="395"/><use href="#gr" y="401"/><use href="#gr" y="406"/><use href="#gr" y="411"/><use href="#gr" y="416"/><use href="#gr" y="422"/><use href="#gr" y="427"/><use href="#gr" y="432"/><use href="#gr" y="437"/><use href="#gr" y="443"/><use href="#gr" y="448"/><use href="#gr" y="453"/><use href="#gr" y="458"/><use href="#gr" y="464"/><use href="#gr" y="469"/><use href="#gr" y="474"/><use href="#gr" y="479"/><use href="#gr" y="484"/><use href="#gr" y="490"/><use href="#gr" y="495"/><use href="#gr" y="500"/><use href="#gr" y="505"/><use href="#gr" y="511"/><use href="#gr" y="516"/><use href="#gr" y="521"/><use href="#gr" y="526"/><use href="#gr" y="532"/><use href="#gr" y="537"/><use href="#gr" y="542"/><use href="#gr" y="547"/><use href="#gr" y="553"/><use href="#gr" y="558"/><use href="#gr" y="563"/><use href="#gr" y="568"/><use href="#gr" y="573"/><use href="#gr" y="579"/><use href="#gr" y="584"/></g>
<rect x="0" y="53" width="831" height="1" fill="#d6d2cd"/><rect x="0" y="54" width="831" height="1" fill="#fbfaf9"/><rect x="0" y="83" width="831" height="1" fill="#d0ccc7"/><rect x="230" y="84" width="601" height="1" fill="#e6e2dd"/><rect x="4" y="31" width="4" height="1" fill="#c4c0ba"/><rect x="4" y="32" width="4" height="1" fill="#fdfcfc"/><rect x="4" y="33" width="4" height="1" fill="#c4c0ba"/><rect x="4" y="34" width="4" height="1" fill="#fdfcfc"/><rect x="4" y="35" width="4" height="1" fill="#c4c0ba"/><rect x="4" y="36" width="4" height="1" fill="#fdfcfc"/><rect x="4" y="37" width="4" height="1" fill="#c4c0ba"/><rect x="4" y="38" width="4" height="1" fill="#fdfcfc"/><rect x="4" y="39" width="4" height="1" fill="#c4c0ba"/><rect x="4" y="40" width="4" height="1" fill="#fdfcfc"/><rect x="4" y="41" width="4" height="1" fill="#c4c0ba"/><rect x="4" y="42" width="4" height="1" fill="#fdfcfc"/><rect x="4" y="43" width="4" height="1" fill="#c4c0ba"/><rect x="4" y="44" width="4" height="1" fill="#fdfcfc"/><rect x="4" y="45" width="4" height="1" fill="#c4c0ba"/><rect x="4" y="46" width="4" height="1" fill="#fdfcfc"/><rect x="4" y="61" width="4" height="1" fill="#c4c0ba"/><rect x="4" y="62" width="4" height="1" fill="#fdfcfc"/><rect x="4" y="63" width="4" height="1" fill="#c4c0ba"/><rect x="4" y="64" width="4" height="1" fill="#fdfcfc"/><rect x="4" y="65" width="4" height="1" fill="#c4c0ba"/><rect x="4" y="66" width="4" height="1" fill="#fdfcfc"/><rect x="4" y="67" width="4" height="1" fill="#c4c0ba"/><rect x="4" y="68" width="4" height="1" fill="#fdfcfc"/><rect x="4" y="69" width="4" height="1" fill="#c4c0ba"/><rect x="4" y="70" width="4" height="1" fill="#fdfcfc"/><rect x="4" y="71" width="4" height="1" fill="#c4c0ba"/><rect x="4" y="72" width="4" height="1" fill="#fdfcfc"/><rect x="4" y="73" width="4" height="1" fill="#c4c0ba"/><rect x="4" y="74" width="4" height="1" fill="#fdfcfc"/><rect x="4" y="75" width="4" height="1" fill="#c4c0ba"/><rect x="4" y="76" width="4" height="1" fill="#fdfcfc"/><rect x="129" y="30" width="1" height="17" fill="#d2cec9"/><rect x="130" y="30" width="1" height="17" fill="#fbfaf9"/><rect x="166" y="30" width="1" height="17" fill="#d2cec9"/><rect x="167" y="30" width="1" height="17" fill="#fbfaf9"/><rect x="203" y="30" width="1" height="17" fill="#d2cec9"/><rect x="204" y="30" width="1" height="17" fill="#fbfaf9"/><rect x="269" y="30" width="1" height="17" fill="#d2cec9"/><rect x="270" y="30" width="1" height="17" fill="#fbfaf9"/><rect x="422" y="30" width="1" height="17" fill="#d2cec9"/><rect x="423" y="30" width="1" height="17" fill="#fbfaf9"/><rect x="488" y="30" width="1" height="17" fill="#d2cec9"/><rect x="489" y="30" width="1" height="17" fill="#fbfaf9"/><rect x="554" y="30" width="1" height="17" fill="#d2cec9"/><rect x="555" y="30" width="1" height="17" fill="#fbfaf9"/><rect x="15" y="88" width="1" height="3" fill="#b8b4ae"/><rect x="16" y="88" width="1" height="3" fill="#fdfcfc"/><rect x="17" y="88" width="1" height="3" fill="#b8b4ae"/><rect x="18" y="88" width="1" height="3" fill="#fdfcfc"/><rect x="19" y="88" width="1" height="3" fill="#b8b4ae"/><rect x="20" y="88" width="1" height="3" fill="#fdfcfc"/><rect x="21" y="88" width="1" height="3" fill="#b8b4ae"/><rect x="22" y="88" width="1" height="3" fill="#fdfcfc"/><rect x="23" y="88" width="1" height="3" fill="#b8b4ae"/><rect x="24" y="88" width="1" height="3" fill="#fdfcfc"/><rect x="25" y="88" width="1" height="3" fill="#b8b4ae"/><rect x="26" y="88" width="1" height="3" fill="#fdfcfc"/><rect x="27" y="88" width="1" height="3" fill="#b8b4ae"/><rect x="28" y="88" width="1" height="3" fill="#fdfcfc"/><rect x="29" y="88" width="1" height="3" fill="#b8b4ae"/><rect x="30" y="88" width="1" height="3" fill="#fdfcfc"/><rect x="31" y="88" width="1" height="3" fill="#b8b4ae"/><rect x="32" y="88" width="1" height="3" fill="#fdfcfc"/><rect x="33" y="88" width="1" height="3" fill="#b8b4ae"/><rect x="34" y="88" width="1" height="3" fill="#fdfcfc"/><rect x="35" y="88" width="1" height="3" fill="#b8b4ae"/><rect x="36" y="88" width="1" height="3" fill="#fdfcfc"/><rect x="37" y="88" width="1" height="3" fill="#b8b4ae"/><rect x="38" y="88" width="1" height="3" fill="#fdfcfc"/><rect x="39" y="88" width="1" height="3" fill="#b8b4ae"/><rect x="40" y="88" width="1" height="3" fill="#fdfcfc"/><rect x="41" y="88" width="1" height="3" fill="#b8b4ae"/><rect x="42" y="88" width="1" height="3" fill="#fdfcfc"/><rect x="43" y="88" width="1" height="3" fill="#b8b4ae"/><rect x="44" y="88" width="1" height="3" fill="#fdfcfc"/><rect x="45" y="88" width="1" height="3" fill="#b8b4ae"/><rect x="46" y="88" width="1" height="3" fill="#fdfcfc"/><rect x="47" y="88" width="1" height="3" fill="#b8b4ae"/><rect x="48" y="88" width="1" height="3" fill="#fdfcfc"/><rect x="49" y="88" width="1" height="3" fill="#b8b4ae"/><rect x="50" y="88" width="1" height="3" fill="#fdfcfc"/><rect x="7" y="161" width="50" height="1" fill="#d2cec9"/><rect x="7" y="162" width="50" height="1" fill="#fbfaf9"/><rect x="7" y="521" width="50" height="1" fill="#d2cec9"/><rect x="7" y="522" width="50" height="1" fill="#fbfaf9"/><rect x="0" y="601" width="64" height="1" fill="#fbfaf9"/><rect x="0" y="602" width="64" height="1" fill="#d2cec9"/><rect x="0" y="84" width="64" height="1" fill="#ffffff"/><rect x="62" y="85" width="1" height="517" fill="#f3f1ee"/><rect x="63" y="85" width="1" height="517" fill="#ffffff"/><rect x="64" y="84" width="150" height="24" fill="#efebe7"/><rect x="64" y="84" width="150" height="1" fill="#7c7872"/><rect x="64" y="84" width="1" height="24" fill="#7c7872"/><rect x="65" y="85" width="148" height="1" fill="#a29e98"/><rect x="65" y="85" width="1" height="22" fill="#a29e98"/><rect x="213" y="85" width="2" height="23" fill="#fff"/><rect x="65" y="107" width="149" height="1" fill="#fff"/><rect x="216" y="84" width="13" height="1" fill="#7c7872"/><rect x="216" y="84" width="1" height="24" fill="#7c7872"/><rect x="217" y="85" width="11" height="1" fill="#a29e98"/><rect x="217" y="85" width="1" height="22" fill="#a29e98"/><rect x="228" y="85" width="2" height="23" fill="#fff"/><rect x="217" y="107" width="12" height="1" fill="#fff"/><rect x="64" y="108" width="767" height="1" fill="#fbfaf9"/>
<defs><linearGradient id="btn" x1="0" y1="0" x2="0" y2="1"><stop offset="0" stop-color="#f8f7f5"/><stop offset="1" stop-color="#e2ded9"/></linearGradient><linearGradient id="trkv" x1="0" y1="0" x2="1" y2="0"><stop offset="0" stop-color="#fbfaf9"/><stop offset="1" stop-color="#e6e2dd"/></linearGradient><linearGradient id="trkh" x1="0" y1="0" x2="0" y2="1"><stop offset="0" stop-color="#fbfaf9"/><stop offset="1" stop-color="#e6e2dd"/></linearGradient></defs><rect x="231.5" y="85.5" width="599" height="22" rx="3" fill="#fff" stroke="#8a857e"/><path d="M810.5 86V107H827.5Q830 107 830 104.5V88.5Q830 86 827.5 86Z" fill="url(#btn)"/><rect x="810" y="86" width="1" height="21" fill="#b4afa8"/><rect x="232" y="86" width="578" height="1" fill="#d8d5d1"/><path d="M816.2 94.6l3.5 3l3.5-3l1.2 1.7l-4.7 4.4l-4.7-4.4z" fill="#000" shape-rendering="geometricPrecision"/><rect x="236" y="89" width="1" height="15" fill="#000"/>
<rect x="817.5" y="109.5" width="13" height="478" rx="2.5" fill="url(#trkv)" stroke="#938e87"/><rect x="818" y="123" width="12" height="1" fill="#938e87"/><rect x="818" y="574" width="12" height="1" fill="#938e87"/><rect x="817" y="124" width="1" height="450" fill="#f7f5f3"/><path d="M820 119.5h7l-3.5-4.5z" fill="#000" shape-rendering="geometricPrecision"/><path d="M820 579h7l-3.5 4.5z" fill="#000" shape-rendering="geometricPrecision"/><rect x="820" y="345" width="7" height="1" fill="#b9b5af"/><rect x="820" y="346" width="7" height="1" fill="#fff"/><rect x="820" y="348" width="7" height="1" fill="#b9b5af"/><rect x="820" y="349" width="7" height="1" fill="#fff"/><rect x="820" y="351" width="7" height="1" fill="#b9b5af"/><rect x="820" y="352" width="7" height="1" fill="#fff"/><rect x="64.5" y="588.5" width="751" height="14" rx="2.5" fill="url(#trkh)" stroke="#938e87"/><rect x="78" y="589" width="1" height="13" fill="#938e87"/><rect x="801" y="589" width="1" height="13" fill="#938e87"/><rect x="79" y="588" width="722" height="1" fill="#f7f5f3"/><path d="M74 592v7l-4.5-3.5z" fill="#000" shape-rendering="geometricPrecision"/><path d="M807 592v7l4.5-3.5z" fill="#000" shape-rendering="geometricPrecision"/><rect x="436" y="592" width="1" height="6" fill="#b9b5af"/><rect x="437" y="592" width="1" height="6" fill="#fff"/><rect x="439" y="592" width="1" height="6" fill="#b9b5af"/><rect x="440" y="592" width="1" height="6" fill="#fff"/><rect x="442" y="592" width="1" height="6" fill="#b9b5af"/><rect x="443" y="592" width="1" height="6" fill="#fff"/><defs><pattern id="grip" width="3" height="3" patternUnits="userSpaceOnUse" x="0" y="0"><rect x="0" y="0" width="1" height="1" fill="#ffffff"/><rect x="0" y="1" width="1" height="1" fill="#bfbbb5"/><rect x="1" y="0" width="1" height="1" fill="#bfbbb5"/><rect x="1" y="2" width="1" height="1" fill="#ffffff"/><rect x="2" y="1" width="1" height="1" fill="#ffffff"/><rect x="2" y="2" width="1" height="1" fill="#bfbbb5"/></pattern></defs><polygon points="814,632 831,615 831,632" fill="url(#grip)"/>
<g shape-rendering="geometricPrecision"><g transform="translate(16,33)" ><path d="M0.5 10.5V1.5L1.5 0.5H4.5L5.5 1.5H10.5V4.5" fill="#ffff66" stroke="#000"/><path d="M0.5 10.5L3.5 4.5H14.5L11 10.5Z" fill="#dcdc14" stroke="#000"/></g><path d="M29 46h5.6l-2.8 3.2z" fill="#000"/><g transform="translate(45,32)" ><rect x="0.5" y="0.5" width="13" height="13" fill="#0000ff" stroke="#000"/><rect x="3" y="1" width="8" height="6" fill="#c0c0c0" stroke="#808080" stroke-width="0.6"/><rect x="3" y="9" width="9" height="4.5" fill="#000"/><rect x="9" y="10" width="2" height="3" fill="#c0c0c0"/><rect x="12" y="1" width="1" height="1" fill="#c0c0c0"/></g><g transform="translate(73,32)" ><path d="M4.5 0.5H13.5L11.5 5.5H2.5Z" fill="#fff" stroke="#000"/><path d="M5.5 2.5H11M4.8 4H10.4" stroke="#000" stroke-width="0.9"/><path d="M2.5 5.5H11.5L15.5 7.5V11.5L12.5 13.5H1.5L0.5 12.5V7.5Z" fill="#fff" stroke="#000"/><path d="M11.5 5.5V13.5" stroke="#000"/><path d="M1 8.5H11.5M1 11.5H11.5" stroke="#000"/><rect x="2" y="10" width="1.6" height="1" fill="#0000ff"/><rect x="4.2" y="10" width="1.6" height="1" fill="#ff0000"/><rect x="7" y="9.6" width="3.4" height="1.4" fill="#f0f000"/><path d="M12.5 7.5l2 1.6M12.5 9.5l2 1.6" stroke="#000" stroke-width="0.8"/></g><rect x="103" y="35" width="9" height="11.6" fill="#00f0f0"/><rect x="103" y="35" width="9" height="2.6" fill="#000"/><rect x="103" y="44" width="9" height="2.6" fill="#000"/><rect x="104" y="35.8" width="1" height="1" fill="#fff"/><rect x="104" y="44.8" width="1" height="1" fill="#fff"/><rect x="106" y="35.8" width="1" height="1" fill="#fff"/><rect x="106" y="44.8" width="1" height="1" fill="#fff"/><rect x="108" y="35.8" width="1" height="1" fill="#fff"/><rect x="108" y="44.8" width="1" height="1" fill="#fff"/><rect x="110" y="35.8" width="1" height="1" fill="#fff"/><rect x="110" y="44.8" width="1" height="1" fill="#fff"/><rect x="108" y="31" width="9" height="11.6" fill="#00f0f0"/><rect x="108" y="31" width="9" height="2.6" fill="#000"/><rect x="108" y="40" width="9" height="2.6" fill="#000"/><rect x="109" y="31.8" width="1" height="1" fill="#fff"/><rect x="109" y="40.8" width="1" height="1" fill="#fff"/><rect x="111" y="31.8" width="1" height="1" fill="#fff"/><rect x="111" y="40.8" width="1" height="1" fill="#fff"/><rect x="113" y="31.8" width="1" height="1" fill="#fff"/><rect x="113" y="40.8" width="1" height="1" fill="#fff"/><rect x="115" y="31.8" width="1" height="1" fill="#fff"/><rect x="115" y="40.8" width="1" height="1" fill="#fff"/><path d="M104.6 39v4.4l3-2.2z" fill="#e8ffff"/><path d="M111 34.5l1.5 1.5M113 34l2 2.6M105 43.6l1 .8" stroke="#e8ffff" stroke-width="0.8"/><g transform="translate(141,31)" ><path d="M0 1.5H3.5M0 5.5H3.5M8 3.5H10.2" stroke="#000" stroke-width="1.1"/><path d="M3.5 0.5H5.2Q8 0.7 8 3.5Q8 6.3 5.2 6.5H3.5Z" fill="none" stroke="#000" stroke-width="1.2"/><rect x="3.5" y="8.5" width="4" height="6" fill="none" stroke="#8a8a8a" stroke-width="1"/><path d="M0.6 9.5H3.2M0.6 11.5H3.2M0.6 13.5H3.2M7.8 9.5H10.4M7.8 11.5H10.4M7.8 13.5H10.4" stroke="#8a8a8a" stroke-width="1"/></g><path d="M176.3 36.1L180.2 31.4L182.3 32.8L178.3 37.2Z" fill="#ffff00"/><path d="M178.3 37.2L182.3 32.8L182.6 42L180.8 44.4Z" fill="#808000"/><path d="M176.5 36.4L178.3 37.4L180.6 44.2L178.6 43.4Z" fill="#808000" stroke="#000090" stroke-width="1.2" stroke-linejoin="round"/><path d="M183.3 34.8L187.9 32.2L191.2 33.2L186.4 35.4Z" fill="#ffff00"/><path d="M185.4 35.4L191.2 33.2V41.4L185.4 43.8Z" fill="#808000"/><path d="M183.5 35L185.4 35.5V43.6L183.5 42.8Z" fill="#808000" stroke="#000090" stroke-width="1.2" stroke-linejoin="round"/><g shape-rendering="crispEdges"><rect x="212" y="31" width="16" height="15" fill="#fff"/><rect x="213" y="32" width="1" height="1" fill="#000"/><rect x="227" y="32" width="1" height="1" fill="#000"/><rect x="213" y="34" width="1" height="1" fill="#000"/><rect x="227" y="34" width="1" height="1" fill="#000"/><rect x="213" y="36" width="1" height="1" fill="#000"/><rect x="227" y="36" width="1" height="1" fill="#000"/><rect x="213" y="38" width="1" height="1" fill="#000"/><rect x="227" y="38" width="1" height="1" fill="#000"/><rect x="213" y="40" width="1" height="1" fill="#000"/><rect x="227" y="40" width="1" height="1" fill="#000"/><rect x="213" y="42" width="1" height="1" fill="#000"/><rect x="227" y="42" width="1" height="1" fill="#000"/><rect x="213" y="44" width="1" height="1" fill="#000"/><rect x="227" y="44" width="1" height="1" fill="#000"/><rect x="213" y="31" width="1" height="1" fill="#000"/><rect x="215" y="31" width="1" height="1" fill="#000"/><rect x="217" y="31" width="1" height="1" fill="#000"/><rect x="219" y="31" width="1" height="1" fill="#000"/><rect x="221" y="31" width="1" height="1" fill="#000"/><rect x="223" y="31" width="1" height="1" fill="#000"/><rect x="225" y="31" width="1" height="1" fill="#000"/><rect x="227" y="31" width="1" height="1" fill="#000"/><rect x="215" y="39" width="3" height="1" fill="#000"/><rect x="219" y="39" width="3" height="1" fill="#000"/><rect x="223" y="39" width="2" height="1" fill="#000"/><rect x="215" y="41" width="2" height="1" fill="#000"/><rect x="218" y="41" width="5" height="1" fill="#000"/><rect x="215" y="43" width="4" height="1" fill="#000"/><rect x="220" y="43" width="4" height="1" fill="#000"/></g><text x="215" y="37.8" font-family="DejaVu Sans Condensed,DejaVu Sans,sans-serif" font-weight="bold" font-size="6.6" textLength="11.6" lengthAdjust="spacingAndGlyphs" fill="#000">SCR</text><path d="M226.6 46h5.6l-2.8 3.2z" fill="#000"/><g shape-rendering="crispEdges"><rect x="241" y="31" width="16" height="15" fill="#fff"/><rect x="242" y="32" width="1" height="1" fill="#000"/><rect x="256" y="32" width="1" height="1" fill="#000"/><rect x="242" y="34" width="1" height="1" fill="#000"/><rect x="256" y="34" width="1" height="1" fill="#000"/><rect x="242" y="36" width="1" height="1" fill="#000"/><rect x="256" y="36" width="1" height="1" fill="#000"/><rect x="242" y="38" width="1" height="1" fill="#000"/><rect x="256" y="38" width="1" height="1" fill="#000"/><rect x="242" y="40" width="1" height="1" fill="#000"/><rect x="256" y="40" width="1" height="1" fill="#000"/><rect x="242" y="42" width="1" height="1" fill="#000"/><rect x="256" y="42" width="1" height="1" fill="#000"/><rect x="242" y="44" width="1" height="1" fill="#000"/><rect x="256" y="44" width="1" height="1" fill="#000"/><rect x="242" y="31" width="1" height="1" fill="#000"/><rect x="244" y="31" width="1" height="1" fill="#000"/><rect x="246" y="31" width="1" height="1" fill="#000"/><rect x="248" y="31" width="1" height="1" fill="#000"/><rect x="250" y="31" width="1" height="1" fill="#000"/><rect x="252" y="31" width="1" height="1" fill="#000"/><rect x="254" y="31" width="1" height="1" fill="#000"/><rect x="256" y="31" width="1" height="1" fill="#000"/><rect x="244" y="39" width="3" height="1" fill="#000"/><rect x="248" y="39" width="3" height="1" fill="#000"/><rect x="252" y="39" width="2" height="1" fill="#000"/><rect x="244" y="41" width="2" height="1" fill="#000"/><rect x="247" y="41" width="5" height="1" fill="#000"/><rect x="244" y="43" width="4" height="1" fill="#000"/><rect x="249" y="43" width="4" height="1" fill="#000"/></g><text x="244" y="37.8" font-family="DejaVu Sans Condensed,DejaVu Sans,sans-serif" font-weight="bold" font-size="6.6" textLength="11.6" lengthAdjust="spacingAndGlyphs" fill="#000">ULP</text><path d="M255.4 46h5.6l-2.8 3.2z" fill="#000"/><path d="M287.8 39.5L294.4 46.1" stroke="#000" stroke-width="3.8" stroke-linecap="butt"/><path d="M288.8 40.5L293.6 45.3" stroke="#f4f400" stroke-width="1.8" stroke-linecap="butt"/><circle cx="284.6" cy="36.3" r="4.9" fill="#fff" stroke="#000" stroke-width="1.3"/><rect x="281" y="34" width="1" height="1" fill="#ff0000"/><rect x="282" y="34" width="1" height="1" fill="#0000ff"/><rect x="283" y="34" width="1" height="1" fill="#ff0000"/><rect x="284" y="34" width="1" height="1" fill="#0000ff"/><rect x="285" y="34" width="1" height="1" fill="#ff0000"/><rect x="286" y="34" width="1" height="1" fill="#0000ff"/><rect x="287" y="34" width="1" height="1" fill="#ff0000"/><rect x="287" y="35" width="1" height="1" fill="#0000ff"/><rect x="287" y="36" width="1" height="1" fill="#ff0000"/><rect x="287" y="37" width="1" height="1" fill="#0000ff"/><rect x="287" y="38" width="1" height="1" fill="#ff0000"/><rect x="286" y="38" width="1" height="1" fill="#0000ff"/><rect x="285" y="38" width="1" height="1" fill="#ff0000"/><rect x="284" y="38" width="1" height="1" fill="#0000ff"/><rect x="283" y="38" width="1" height="1" fill="#ff0000"/><rect x="282" y="38" width="1" height="1" fill="#0000ff"/><rect x="281" y="38" width="1" height="1" fill="#ff0000"/><rect x="281" y="37" width="1" height="1" fill="#0000ff"/><rect x="281" y="36" width="1" height="1" fill="#ff0000"/><rect x="281" y="35" width="1" height="1" fill="#0000ff"/><path d="M316.8 39.5L323.4 46.1" stroke="#000" stroke-width="3.8" stroke-linecap="butt"/><path d="M317.8 40.5L322.6 45.3" stroke="#f4f400" stroke-width="1.8" stroke-linecap="butt"/><circle cx="313.6" cy="36.3" r="4.9" fill="#fff" stroke="#000" stroke-width="1.3"/><rect x="311" y="36" width="1" height="1" fill="#ff0000"/><rect x="312" y="36" width="1" height="1" fill="#0000ff"/><rect x="313" y="36" width="1" height="1" fill="#ff0000"/><rect x="314" y="36" width="1" height="1" fill="#0000ff"/><rect x="315" y="36" width="1" height="1" fill="#ff0000"/><rect x="316" y="36" width="1" height="1" fill="#0000ff"/><rect x="313" y="33" width="1" height="1" fill="#ff0000"/><rect x="313" y="34" width="1" height="1" fill="#0000ff"/><rect x="313" y="35" width="1" height="1" fill="#ff0000"/><rect x="313" y="37" width="1" height="1" fill="#0000ff"/><rect x="313" y="38" width="1" height="1" fill="#ff0000"/><rect x="313" y="39" width="1" height="1" fill="#0000ff"/><path d="M311.5 42.6l1.8 1.8l-1.8 1.8l-1.8-1.8z" fill="#ff0000"/><path d="M345.8 39.5L352.4 46.1" stroke="#000" stroke-width="3.8" stroke-linecap="butt"/><path d="M346.8 40.5L351.6 45.3" stroke="#f4f400" stroke-width="1.8" stroke-linecap="butt"/><circle cx="342.6" cy="36.3" r="4.9" fill="#fff" stroke="#000" stroke-width="1.3"/><rect x="341" y="36" width="1" height="1" fill="#ff0000"/><rect x="342" y="36" width="1" height="1" fill="#0000ff"/><rect x="343" y="36" width="1" height="1" fill="#ff0000"/><rect x="337" y="44" width="1" height="1" fill="#ff0000"/><rect x="338" y="44" width="1" height="1" fill="#0000ff"/><rect x="339" y="44" width="1" height="1" fill="#ff0000"/><rect x="340" y="44" width="1" height="1" fill="#0000ff"/><rect x="341" y="44" width="1" height="1" fill="#ff0000"/><rect x="342" y="44" width="1" height="1" fill="#0000ff"/><rect x="343" y="44" width="1" height="1" fill="#ff0000"/><path d="M374.8 39.5L381.4 46.1" stroke="#000" stroke-width="3.8" stroke-linecap="butt"/><path d="M375.8 40.5L380.6 45.3" stroke="#f4f400" stroke-width="1.8" stroke-linecap="butt"/><circle cx="371.6" cy="36.3" r="4.9" fill="#fff" stroke="#000" stroke-width="1.3"/><rect x="369" y="34.5" width="1" height="1" fill="#ff0000"/><rect x="370" y="34.5" width="1" height="1" fill="#0000ff"/><rect x="371" y="34.5" width="1" height="1" fill="#ff0000"/><rect x="372" y="34.5" width="1" height="1" fill="#0000ff"/><rect x="373" y="34.5" width="1" height="1" fill="#ff0000"/><rect x="369" y="37" width="1" height="1" fill="#0000ff"/><rect x="370" y="37" width="1" height="1" fill="#ff0000"/><rect x="371" y="37" width="1" height="1" fill="#0000ff"/><rect x="372" y="37" width="1" height="1" fill="#ff0000"/><rect x="373" y="37" width="1" height="1" fill="#0000ff"/><rect x="367" y="43" width="1" height="1" fill="#ff0000"/><rect x="368" y="43" width="1" height="1" fill="#0000ff"/><rect x="369" y="43" width="1" height="1" fill="#ff0000"/><rect x="370" y="43" width="1" height="1" fill="#0000ff"/><rect x="371" y="43" width="1" height="1" fill="#ff0000"/><rect x="367" y="45" width="1" height="1" fill="#0000ff"/><rect x="368" y="45" width="1" height="1" fill="#ff0000"/><rect x="369" y="45" width="1" height="1" fill="#0000ff"/><rect x="370" y="45" width="1" height="1" fill="#ff0000"/><rect x="371" y="45" width="1" height="1" fill="#0000ff"/><rect x="396.5" y="34.5" width="13" height="10" fill="#fff" stroke="#000" stroke-width="1.2"/><path d="M403.8 39.5L410.4 46.1" stroke="#000" stroke-width="3.8" stroke-linecap="butt"/><path d="M404.8 40.5L409.6 45.3" stroke="#f4f400" stroke-width="1.8" stroke-linecap="butt"/><circle cx="400.6" cy="36.3" r="4.9" fill="#fff" stroke="#000" stroke-width="1.3"/><rect x="398" y="34" width="1" height="1" fill="#ff0000"/><rect x="399" y="34" width="1" height="1" fill="#0000ff"/><rect x="400" y="34" width="1" height="1" fill="#ff0000"/><rect x="401" y="34" width="1" height="1" fill="#0000ff"/><rect x="402" y="34" width="1" height="1" fill="#ff0000"/><rect x="402" y="35" width="1" height="1" fill="#0000ff"/><rect x="402" y="36" width="1" height="1" fill="#ff0000"/><rect x="402" y="37" width="1" height="1" fill="#0000ff"/><rect x="402" y="38" width="1" height="1" fill="#ff0000"/><rect x="401" y="38" width="1" height="1" fill="#0000ff"/><rect x="400" y="38" width="1" height="1" fill="#ff0000"/><rect x="399" y="38" width="1" height="1" fill="#0000ff"/><rect x="398" y="38" width="1" height="1" fill="#ff0000"/><rect x="398" y="37" width="1" height="1" fill="#0000ff"/><rect x="398" y="36" width="1" height="1" fill="#ff0000"/><rect x="398" y="35" width="1" height="1" fill="#0000ff"/><path d="M409 46.6h5.6l-2.8 3.2z" fill="#000"/><g transform="translate(434,34.5)"><g transform="translate(1,1)"><path d="M0 1.5V7H5.5Z" fill="#fff"/><path d="M3.6 4.4Q6 0.6 9.6 1.2Q12.4 2.2 11.8 5.2L11.2 7.4" fill="none" stroke="#fff" stroke-width="1.4"/></g><path d="M0 1.5V7H5.5Z" fill="#7e7e7e"/><path d="M3.6 4.4Q6 0.6 9.6 1.2Q12.4 2.2 11.8 5.2L11.2 7.4" fill="none" stroke="#7e7e7e" stroke-width="1.4"/></g><g transform="translate(476,34.5) scale(-1,1)"><g transform="translate(1,1)"><path d="M0 1.5V7H5.5Z" fill="#fff"/><path d="M3.6 4.4Q6 0.6 9.6 1.2Q12.4 2.2 11.8 5.2L11.2 7.4" fill="none" stroke="#fff" stroke-width="1.4"/></g><path d="M0 1.5V7H5.5Z" fill="#7e7e7e"/><path d="M3.6 4.4Q6 0.6 9.6 1.2Q12.4 2.2 11.8 5.2L11.2 7.4" fill="none" stroke="#7e7e7e" stroke-width="1.4"/></g><polygon points="514.2,42.3 509.5,47.0 502.9,47.0 498.2,42.3 498.2,35.7 502.9,31.0 509.5,31.0 514.2,35.7" fill="#808080"/><text x="506.3" y="41.6" text-anchor="middle" font-family="Liberation Sans Narrow,Liberation Sans,sans-serif" font-weight="bold" font-size="7.4" textLength="13.4" lengthAdjust="spacingAndGlyphs" fill="#fff" stroke="#fff" stroke-width="0.3">STOP</text><defs><pattern id="chk" width="2" height="2" patternUnits="userSpaceOnUse"><rect width="2" height="2" fill="#c8c8c8"/><rect width="1" height="1" fill="#000"/><rect x="1" y="1" width="1" height="1" fill="#000"/></pattern></defs><rect x="531" y="31" width="9" height="16" rx="1" fill="url(#chk)" shape-rendering="crispEdges"/><circle cx="535.5" cy="34.4" r="1.7" fill="#a8a8a8"/><circle cx="535.5" cy="39" r="1.7" fill="#a8a8a8"/><circle cx="535.5" cy="43.8" r="2.1" fill="#00a000"/><rect x="535.6" y="42.6" width="1" height="1" fill="#b0ffb0"/><text x="572.4" y="45.2" text-anchor="middle" font-family="Liberation Sans,sans-serif" font-weight="bold" font-size="17.5" fill="#ffff00" stroke="#000" stroke-width="0.9" paint-order="stroke">?</text><g shape-rendering="crispEdges"><rect x="16" y="62" width="1" height="1" fill="#000"/><rect x="16" y="65" width="1" height="1" fill="#000"/><rect x="16" y="68" width="1" height="1" fill="#000"/><rect x="16" y="71" width="1" height="1" fill="#000"/><rect x="16" y="74" width="1" height="1" fill="#000"/><rect x="19" y="62" width="1" height="1" fill="#000"/><rect x="19" y="65" width="1" height="1" fill="#000"/><rect x="19" y="68" width="1" height="1" fill="#000"/><rect x="19" y="71" width="1" height="1" fill="#000"/><rect x="19" y="74" width="1" height="1" fill="#000"/><rect x="22" y="62" width="1" height="1" fill="#000"/><rect x="22" y="65" width="1" height="1" fill="#000"/><rect x="22" y="68" width="1" height="1" fill="#000"/><rect x="22" y="71" width="1" height="1" fill="#000"/><rect x="22" y="74" width="1" height="1" fill="#000"/><rect x="25" y="62" width="1" height="1" fill="#000"/><rect x="25" y="65" width="1" height="1" fill="#000"/><rect x="25" y="68" width="1" height="1" fill="#000"/><rect x="25" y="71" width="1" height="1" fill="#000"/><rect x="25" y="74" width="1" height="1" fill="#000"/><rect x="28" y="62" width="1" height="1" fill="#000"/><rect x="28" y="65" width="1" height="1" fill="#000"/><rect x="28" y="68" width="1" height="1" fill="#000"/><rect x="28" y="71" width="1" height="1" fill="#000"/><rect x="28" y="74" width="1" height="1" fill="#000"/></g><path d="M29 76h5.6l-2.8 3.2z" fill="#000"/><text x="16" y="115.8" text-anchor="middle" font-family="Liberation Serif,serif" font-weight="bold" font-size="19.5" fill="#000" stroke="#000" stroke-width="0.5">i</text><path d="M39.3 108.3Q46.5 100.4 54.8 108.3Q46.5 115.4 39.3 108.3Z" fill="#fff" stroke="#808000" stroke-width="1.2"/><circle cx="46.6" cy="108.2" r="3" fill="#00e8f8"/><circle cx="46.6" cy="108.2" r="1.3" fill="#000"/><g shape-rendering="crispEdges"><rect x="15" y="138" width="8" height="8" fill="#008000"/><rect x="12" y="136" width="8" height="8" fill="#800000"/><rect x="9" y="134" width="8" height="8" fill="#000080"/></g><path d="M24 149h5.6l-2.8 3.2z" fill="#000"/><path d="M40.5 134V147M39.5 146.5H53.5" stroke="#000" stroke-width="1.2"/><rect x="39" y="134.0" width="3" height="1" fill="#000"/><rect x="43.0" y="145" width="1" height="3" fill="#000"/><rect x="39" y="136.6" width="3" height="1" fill="#000"/><rect x="45.6" y="145" width="1" height="3" fill="#000"/><rect x="39" y="139.2" width="3" height="1" fill="#000"/><rect x="48.2" y="145" width="1" height="3" fill="#000"/><rect x="39" y="141.8" width="3" height="1" fill="#000"/><rect x="50.8" y="145" width="1" height="3" fill="#000"/><rect x="39" y="144.4" width="3" height="1" fill="#000"/><rect x="53.4" y="145" width="1" height="3" fill="#000"/><path d="M44 141.5H49M46.5 139V144" stroke="#000" stroke-width="1.2"/><rect x="47.5" y="133.6" width="2.6" height="2.8" fill="none" stroke="#000" stroke-width="1"/><path d="M50.1 136V138.6" stroke="#000"/><rect x="52" y="133.6" width="2.6" height="3.6" fill="none" stroke="#000" stroke-width="1"/><g transform="translate(15.6,180.5)" ><path d="M-5.5 0H5.5M0 -5.5V5.5" stroke="#000" stroke-width="1.4"/><path d="M-7.6 0l3-2.6v5.2zM7.6 0l-3-2.6v5.2zM0 -7.6l-2.6 3h5.2zM0 7.6l-2.6-3h5.2z" fill="#000"/></g><circle cx="42.5" cy="177" r="1.6" fill="#fff" stroke="#000" stroke-width="1"/><path d="M42.5 178.8V182.4M39.9 180.2H45.1M42.5 182.2L40.3 186.6M42.5 182.2L44.7 186.6" stroke="#000" stroke-width="1.1" fill="none"/><circle cx="51.7" cy="177" r="1.6" fill="#fff" stroke="#000" stroke-width="1"/><path d="M51.7 178.8V182.4M49.1 180.2H54.300000000000004M51.7 182.2L49.5 186.6M51.7 182.2L53.900000000000006 186.6" stroke="#000" stroke-width="1.1" fill="none"/><path d="M13.5 209.5H9.5V216.5H13.5M9.5 212.5H12.5M17.5 209.5H21.5V216.5H17.5M21.5 212.5H18.5" stroke="#000" stroke-width="1.2" fill="none"/><g shape-rendering="crispEdges"><rect x="15" y="206" width="1" height="1" fill="#000"/><rect x="15" y="208" width="1" height="1" fill="#000"/><rect x="15" y="210" width="1" height="1" fill="#000"/><rect x="15" y="212" width="1" height="1" fill="#000"/><rect x="15" y="214" width="1" height="1" fill="#000"/><rect x="15" y="216" width="1" height="1" fill="#000"/><rect x="15" y="218" width="1" height="1" fill="#000"/><rect x="15" y="220" width="1" height="1" fill="#000"/></g><rect x="39" y="214" width="12" height="3" fill="#808080"/><rect x="43" y="209" width="3" height="12" fill="#000"/><path d="M46 206.4Q52.4 207.4 53.2 213.6" fill="none" stroke="#000" stroke-width="1.1"/><path d="M44.4 206.2l3.2-1.8v3.6z" fill="#000"/><rect x="9.5" y="238.5" width="13" height="13" fill="none" stroke="#000" stroke-width="1.3" stroke-dasharray="2.2 1.9" shape-rendering="crispEdges"/><path d="M41.6 249.6L48 243.2" stroke="#000" stroke-width="4.6" stroke-linecap="round"/><circle cx="49.8" cy="241.6" r="3.7" fill="#000"/><path d="M41.6 249.6L48 243.2" stroke="#6e6e6e" stroke-width="2.6" stroke-linecap="round"/><circle cx="49.8" cy="241.6" r="2.7" fill="#6e6e6e"/><path d="M49.6 241.8L51.2 236.4L55.4 240.6Z" fill="#efebe7"/><path d="M49.4 242L51 237.6M49.4 242L54 240.4" stroke="#000" stroke-width="0.9" fill="none"/><path d="M22.4 270.4L13.4 279.4M24 277H15.6L13 279" stroke="#000" stroke-width="1.8" fill="none"/><ellipse cx="10.8" cy="279" rx="2" ry="1.5" fill="#fff" stroke="#000" stroke-width="1" transform="rotate(-25 10.8 279)"/><ellipse cx="14" cy="282.6" rx="1.5" ry="2.2" fill="#fff" stroke="#000" stroke-width="1" transform="rotate(25 14 282.6)"/><path d="M42.6 270.6L53.6 280.2" stroke="#000" stroke-width="1.7"/><path d="M43.6 270L54.2 279.4" stroke="#fff" stroke-width="0.5"/><path d="M48.6 277.8L52.6 281.4L53.6 284.6H43L47.6 282.4Z" fill="#ffff00"/><path d="M9.6 302.6Q14 305.4 21.4 314.2" stroke="#000" stroke-width="1.7" fill="none"/><path d="M21.4 302.6Q15 306 11 312.8" stroke="#000" stroke-width="2.1" fill="none" stroke-linecap="round"/><path d="M41 305.5H44M41 308.5H44M41 311.5H44M50.4 308.5H53.8" stroke="#800000" stroke-width="1.1"/><path d="M44.5 303.5H47Q50.6 304 50.6 308.5Q50.6 313 47 313.5H44.5Z" fill="none" stroke="#800000" stroke-width="1.2"/><path d="M47 309V316L48.8 314.4L50.2 317L51.4 316.4L50.2 313.8H52.4Z" fill="#000"/><path d="M55 317.4h5.6l-2.8 3.2z" fill="#000"/><path d="M10.5 337V346" stroke="#000" stroke-width="1.1"/><path d="M10.5 335.4l-2.4 3h4.8zM10.5 347.6l-2.4-3h4.8z" fill="#000"/><path d="M14 337.5H18.5M14 345.5H18.5M18.5 334.5V348.5M18.5 334.5H21.5L24 338M18.5 348.5H21.5L24 345" stroke="#800000" stroke-width="1.2" fill="none"/><circle cx="41.8" cy="336.4" r="1.2" fill="#008000"/><circle cx="41.8" cy="344.8" r="1.2" fill="#008000"/><circle cx="52" cy="335.4" r="2" fill="#008000"/><circle cx="52" cy="346" r="2" fill="#008000"/><rect x="40.2" y="338" width="3.2" height="5" fill="#fff" stroke="#000" stroke-width="1.2"/><rect x="50.2" y="337.4" width="3.4" height="6.6" fill="#fff" stroke="#000" stroke-width="1.2"/><path d="M44.6 340.5H48" stroke="#000" stroke-width="1.1"/><path d="M49.4 340.5l-2.2-1.8v3.6z" fill="#000"/><path d="M55 349.6h5.6l-2.8 3.2z" fill="#000"/><path d="M12.6 370V368.4Q12.6 366.4 15.6 366.4Q18.8 366.4 18.8 368.4V370" fill="none" stroke="#909090" stroke-width="1.8"/><rect x="10.4" y="369.6" width="10.6" height="10" fill="#404040"/><rect x="10" y="369.2" width="10" height="9.6" fill="#989898"/><path d="M15.2 371l-2.6 2.8h1.8v3.4h1.6v-3.4h1.8z" fill="#000"/><rect x="13" y="367.4" width="5" height="1.2" fill="#fff"/><text x="16.4" y="403" font-family="DejaVu Sans,sans-serif" font-weight="bold" font-size="6.8" text-anchor="middle" textLength="10.6" lengthAdjust="spacingAndGlyphs" fill="#000">R2</text><path d="M9 405.5H23" stroke="#a00000" stroke-width="1.1"/><rect x="12.5" y="404" width="7" height="3" fill="#fff" stroke="#a00000" stroke-width="1.1"/><text x="16.4" y="414.2" font-family="DejaVu Sans,sans-serif" font-weight="bold" font-size="6.8" text-anchor="middle" textLength="10.6" lengthAdjust="spacingAndGlyphs" fill="#8c8c8c">10k</text><text x="47.4" y="403" font-family="DejaVu Sans,sans-serif" font-weight="bold" font-size="6.8" text-anchor="middle" textLength="10.6" lengthAdjust="spacingAndGlyphs" fill="#8c8c8c">R2</text><path d="M40 405.5H54" stroke="#a00000" stroke-width="1.1"/><rect x="43.5" y="404" width="7" height="3" fill="#fff" stroke="#a00000" stroke-width="1.1"/><text x="47.4" y="414.2" font-family="DejaVu Sans,sans-serif" font-weight="bold" font-size="6.8" text-anchor="middle" textLength="10.6" lengthAdjust="spacingAndGlyphs" fill="#000">10k</text><path d="M55 413h5.6l-2.8 3.2z" fill="#000"/><path d="M10.5 433.5H20.5V440.5H10.5V438.4L11.6 437L10.5 435.6Z" fill="#fff" stroke="#000" stroke-width="1.2"/><g shape-rendering="crispEdges"><rect x="15" y="430" width="1" height="2" fill="#000"/><rect x="17" y="430" width="1" height="2" fill="#000"/><rect x="19" y="430" width="1" height="2" fill="#000"/><rect x="15" y="431" width="5" height="1" fill="#000"/><rect x="15" y="442" width="1" height="2" fill="#000"/><rect x="17" y="442" width="2" height="1" fill="#000"/><rect x="18" y="443" width="1" height="1" fill="#000"/><rect x="20" y="442" width="1" height="2" fill="#000"/><rect x="13" y="435" width="2" height="1" fill="#888"/><rect x="16" y="435" width="2" height="1" fill="#888"/><rect x="13" y="437" width="1" height="2" fill="#666"/><rect x="15" y="438" width="2" height="1" fill="#666"/><rect x="18" y="437" width="1" height="2" fill="#666"/></g><path d="M41 431.4H47.4Q43 433 41 437.6Z" fill="#909090"/><path d="M41.8 444V441Q42.4 433 53.6 432.4" fill="none" stroke="#000" stroke-width="2"/><path d="M10.4 474.6L21.8 463.2" stroke="#909090" stroke-width="1.6"/><path d="M9.8 475.6L11.6 464.6L22.6 462.6" fill="none" stroke="#000" stroke-width="2"/><path d="M40.4 475.2L53 462.6" stroke="#000" stroke-width="2"/><path d="M48 472.5H53M50.5 470V475" stroke="#000" stroke-width="1.1"/><path d="M16 502L22 507.2" stroke="#808000" stroke-width="1.4"/><rect x="11" y="494" width="5" height="2" fill="#0000ff"/><rect x="15" y="494" width="2" height="2" fill="#008000"/><rect x="15" y="496" width="2" height="6.4" fill="#ff0000"/><circle cx="9.8" cy="495" r="2" fill="#008000"/><circle cx="22" cy="507.2" r="2" fill="#008000"/><g shape-rendering="crispEdges"><rect x="43" y="494" width="1" height="1" fill="#000090"/><rect x="44" y="494" width="1" height="1" fill="#000090"/><rect x="45" y="495" width="1" height="1" fill="#000090"/><rect x="46" y="494" width="1" height="1" fill="#900000"/><rect x="47" y="495" width="1" height="1" fill="#900000"/><rect x="46" y="496" width="1" height="1" fill="#900000"/><rect x="47" y="497" width="1" height="1" fill="#000090"/><rect x="46" y="498" width="1" height="1" fill="#000090"/><rect x="47" y="499" width="1" height="1" fill="#000090"/><rect x="47" y="501" width="1" height="1" fill="#900000"/><rect x="46" y="502" width="1" height="1" fill="#900000"/><rect x="46" y="504" width="1" height="1" fill="#900000"/><rect x="47" y="505" width="1" height="1" fill="#000090"/><rect x="48" y="506" width="1" height="1" fill="#000090"/><rect x="49" y="507" width="1" height="1" fill="#000090"/><rect x="50" y="506" width="1" height="1" fill="#900000"/><rect x="45" y="494" width="2" height="1" fill="#008000"/><rect x="46" y="507" width="2" height="1" fill="#008000"/></g><path d="M40.8 494.8L53 507" stroke="#808000" stroke-width="1.4"/><circle cx="40.8" cy="494.8" r="2" fill="#008000"/><circle cx="53" cy="507" r="2" fill="#008000"/><path d="M9.6 548L22.4 535.2" stroke="#000" stroke-width="2"/><text x="47.2" y="547.4" text-anchor="middle" font-family="Liberation Serif,serif" font-size="18.4" fill="#000" stroke="#000" stroke-width="0.7">T</text><circle cx="16" cy="572.8" r="6.3" fill="none" stroke="#000" stroke-width="2"/><path d="M40.6 571A6.3 6.3 0 1 1 49.6 578.6" fill="none" stroke="#000" stroke-width="2"/><path d="M30 593.4l2.6 2.8l2.6-2.8M30 597.4l2.6 2.8l2.6-2.8" fill="none" stroke="#000" stroke-width="1.5"/></g>
</svg>
<div class="menu abs" style="left:0;top:0;width:831px;height:23px;background:linear-gradient(#efece8,#e4e0db)">
<span style="left:6px"><u>F</u>ile</span>
<span style="left:37px"><u>E</u>dit</span>
<span style="left:73px"><u>D</u>raw</span>
<span style="left:116px"><u>V</u>iew</span>
<span style="left:157px"><u>T</u>ools</span>
<span style="left:196px"><u>L</u>ibrary</span>
<span style="left:250px"><u>O</u>ptions</span>
<span style="left:308px"><u>W</u>indow</span>
<span style="left:368px"><u>H</u>elp</span>
</div>
<div class="abs" style="left:0;top:23px;width:831px;height:1px;background:#cdc9c5"></div>
<div class="abs" style="left:0;top:24px;width:831px;height:1px;background:#ffffff"></div>
<div class="abs" style="left:69px;top:89px;font-size:13px;line-height:16px;letter-spacing:-0.26px;white-space:nowrap">0.05 inch (3.05 -0.20)</div>
</body></html>
